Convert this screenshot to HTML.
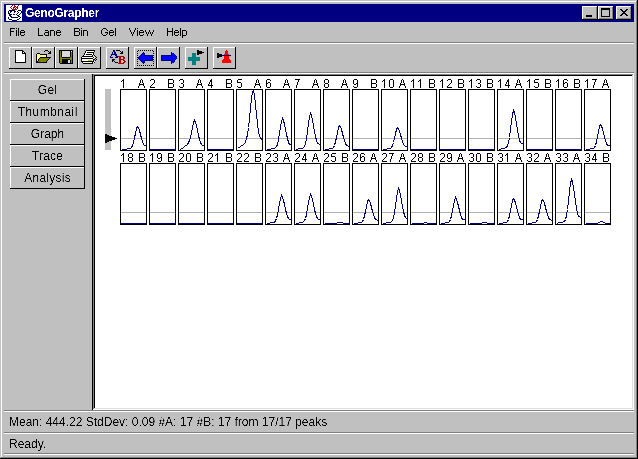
<!DOCTYPE html>
<html><head><meta charset="utf-8"><style>
html,body{margin:0;padding:0;}
#r{position:relative;width:638px;height:459px;overflow:hidden;background:#c0c0c0;font-family:"Liberation Sans",sans-serif;}
#r div,#r span,#r svg{position:absolute;}
.t{white-space:pre;filter:url(#thr3);}
.s{filter:url(#thr3) !important;}
</style></head><body><svg width="0" height="0" style="position:absolute"><filter id="thr" x="-20%" y="-20%" width="140%" height="140%"><feComponentTransfer><feFuncA type="discrete" tableValues="0 0 0 0 0 0 0 0 0 1 1 1 1 1 1 1 1 1 1 1"/></feComponentTransfer></filter><filter id="thr3" x="-20%" y="-20%" width="140%" height="140%"><feComponentTransfer><feFuncA type="linear" slope="3" intercept="-1.1"/></feComponentTransfer></filter></svg><div id="r">
<div style="left:0px;top:0px;width:638px;height:1px;background:#c0c0c0;"></div>
<div style="left:0px;top:0px;width:1px;height:459px;background:#c0c0c0;"></div>
<div style="left:1px;top:1px;width:636px;height:1px;background:#ffffff;"></div>
<div style="left:1px;top:1px;width:1px;height:457px;background:#ffffff;"></div>
<div style="left:0px;top:458px;width:638px;height:1px;background:#000000;"></div>
<div style="left:637px;top:0px;width:1px;height:459px;background:#000000;"></div>
<div style="left:1px;top:457px;width:636px;height:1px;background:#808080;"></div>
<div style="left:636px;top:1px;width:1px;height:457px;background:#808080;"></div>
<div style="left:4px;top:4px;width:630px;height:18px;background:#000080;"></div>
<div style="left:582px;top:6px;width:16px;height:14px;background:#c0c0c0;"></div>
<div style="left:582px;top:6px;width:15px;height:1px;background:#ffffff;"></div>
<div style="left:582px;top:6px;width:1px;height:13px;background:#ffffff;"></div>
<div style="left:582px;top:19px;width:16px;height:1px;background:#000000;"></div>
<div style="left:597px;top:6px;width:1px;height:14px;background:#000000;"></div>
<div style="left:583px;top:18px;width:14px;height:1px;background:#808080;"></div>
<div style="left:596px;top:7px;width:1px;height:12px;background:#808080;"></div>
<div style="left:598px;top:6px;width:16px;height:14px;background:#c0c0c0;"></div>
<div style="left:598px;top:6px;width:15px;height:1px;background:#ffffff;"></div>
<div style="left:598px;top:6px;width:1px;height:13px;background:#ffffff;"></div>
<div style="left:598px;top:19px;width:16px;height:1px;background:#000000;"></div>
<div style="left:613px;top:6px;width:1px;height:14px;background:#000000;"></div>
<div style="left:599px;top:18px;width:14px;height:1px;background:#808080;"></div>
<div style="left:612px;top:7px;width:1px;height:12px;background:#808080;"></div>
<div style="left:616px;top:6px;width:16px;height:14px;background:#c0c0c0;"></div>
<div style="left:616px;top:6px;width:15px;height:1px;background:#ffffff;"></div>
<div style="left:616px;top:6px;width:1px;height:13px;background:#ffffff;"></div>
<div style="left:616px;top:19px;width:16px;height:1px;background:#000000;"></div>
<div style="left:631px;top:6px;width:1px;height:14px;background:#000000;"></div>
<div style="left:617px;top:18px;width:14px;height:1px;background:#808080;"></div>
<div style="left:630px;top:7px;width:1px;height:12px;background:#808080;"></div>
<div style="left:586px;top:15px;width:6px;height:2px;background:#000000;"></div>
<div style="left:601px;top:8px;width:9px;height:9px;background:#000000;"></div>
<div style="left:602px;top:10px;width:7px;height:6px;background:#c0c0c0;"></div>
<svg style="left:620px;top:9px" width="8" height="7" shape-rendering="crispEdges"><rect x="0" y="0" width="2" height="1" fill="#000"/><rect x="6" y="0" width="2" height="1" fill="#000"/><rect x="1" y="1" width="2" height="1" fill="#000"/><rect x="5" y="1" width="2" height="1" fill="#000"/><rect x="2" y="2" width="2" height="1" fill="#000"/><rect x="4" y="2" width="2" height="1" fill="#000"/><rect x="3" y="3" width="2" height="1" fill="#000"/><rect x="3" y="3" width="2" height="1" fill="#000"/><rect x="4" y="4" width="2" height="1" fill="#000"/><rect x="2" y="4" width="2" height="1" fill="#000"/><rect x="5" y="5" width="2" height="1" fill="#000"/><rect x="1" y="5" width="2" height="1" fill="#000"/><rect x="6" y="6" width="2" height="1" fill="#000"/><rect x="0" y="6" width="2" height="1" fill="#000"/></svg>
<div style="left:6px;top:5px;width:16px;height:16px;background:#fff;"></div>
<svg style="left:6px;top:5px" width="16" height="16" shape-rendering="crispEdges"><rect x="6" y="0" width="1" height="1" fill="#b00000"/><rect x="8" y="0" width="1" height="1" fill="#b00000"/><rect x="12" y="0" width="1" height="1" fill="#600060"/><rect x="5" y="1" width="1" height="1" fill="#b00000"/><rect x="8" y="1" width="2" height="1" fill="#b00000"/><rect x="11" y="1" width="1" height="1" fill="#b00000"/><rect x="4" y="2" width="1" height="1" fill="#b00000"/><rect x="7" y="2" width="2" height="1" fill="#b00000"/><rect x="10" y="2" width="2" height="1" fill="#b00000"/><rect x="5" y="3" width="1" height="1" fill="#b00000"/><rect x="7" y="3" width="1" height="1" fill="#b00000"/><rect x="9" y="3" width="1" height="1" fill="#b00000"/><rect x="11" y="3" width="1" height="1" fill="#b00000"/><rect x="6" y="4" width="5" height="1" fill="#b00000"/><rect x="3" y="5" width="6" height="1" fill="#000040"/><rect x="12" y="5" width="3" height="1" fill="#000040"/><rect x="2" y="6" width="1" height="1" fill="#000040"/><rect x="4" y="6" width="2" height="1" fill="#000040"/><rect x="8" y="6" width="2" height="1" fill="#000040"/><rect x="11" y="6" width="1" height="1" fill="#000040"/><rect x="15" y="6" width="1" height="1" fill="#000040"/><rect x="2" y="7" width="1" height="1" fill="#000040"/><rect x="4" y="7" width="1" height="1" fill="#000040"/><rect x="8" y="7" width="1" height="1" fill="#600060"/><rect x="12" y="7" width="1" height="1" fill="#000040"/><rect x="15" y="7" width="1" height="1" fill="#000040"/><rect x="2" y="8" width="2" height="1" fill="#000040"/><rect x="11" y="8" width="1" height="1" fill="#000040"/><rect x="14" y="8" width="1" height="1" fill="#000040"/><rect x="3" y="9" width="3" height="1" fill="#000040"/><rect x="7" y="9" width="2" height="1" fill="#000040"/><rect x="10" y="9" width="1" height="1" fill="#000040"/><rect x="13" y="9" width="1" height="1" fill="#000040"/><rect x="3" y="10" width="2" height="1" fill="#000040"/><rect x="11" y="10" width="2" height="1" fill="#000040"/><rect x="4" y="11" width="2" height="1" fill="#000040"/><rect x="12" y="11" width="2" height="1" fill="#000040"/><rect x="2" y="12" width="1" height="1" fill="#000040"/><rect x="5" y="12" width="7" height="1" fill="#000040"/><rect x="14" y="12" width="1" height="1" fill="#000040"/><rect x="2" y="13" width="1" height="1" fill="#000040"/><rect x="13" y="13" width="1" height="1" fill="#000040"/><rect x="3" y="14" width="3" height="1" fill="#000040"/><rect x="11" y="14" width="2" height="1" fill="#000040"/><rect x="6" y="15" width="5" height="1" fill="#000040"/></svg>
<span class="t" style="left:25px;top:6px;font:bold 12px 'Liberation Sans';color:#fff;letter-spacing:-0.3px;line-height:14px;padding-right:4px">GenoGrapher</span>
<svg style="left:8px;top:28px" width="190" height="10" shape-rendering="crispEdges" fill="#000"><rect x="2" y="0" width="5" height="1"/><rect x="2" y="1" width="1" height="1"/><rect x="2" y="2" width="1" height="1"/><rect x="2" y="3" width="4" height="1"/><rect x="2" y="4" width="1" height="1"/><rect x="2" y="5" width="1" height="1"/><rect x="2" y="6" width="1" height="1"/><rect x="2" y="7" width="1" height="1"/><rect x="8" y="0" width="1" height="1"/><rect x="8" y="2" width="1" height="1"/><rect x="8" y="3" width="1" height="1"/><rect x="8" y="4" width="1" height="1"/><rect x="8" y="5" width="1" height="1"/><rect x="8" y="6" width="1" height="1"/><rect x="8" y="7" width="1" height="1"/><rect x="10" y="0" width="1" height="1"/><rect x="10" y="1" width="1" height="1"/><rect x="10" y="2" width="1" height="1"/><rect x="10" y="3" width="1" height="1"/><rect x="10" y="4" width="1" height="1"/><rect x="10" y="5" width="1" height="1"/><rect x="10" y="6" width="1" height="1"/><rect x="10" y="7" width="1" height="1"/><rect x="13" y="2" width="3" height="1"/><rect x="12" y="3" width="1" height="1"/><rect x="16" y="3" width="1" height="1"/><rect x="12" y="4" width="5" height="1"/><rect x="12" y="5" width="1" height="1"/><rect x="12" y="6" width="1" height="1"/><rect x="16" y="6" width="1" height="1"/><rect x="13" y="7" width="3" height="1"/><rect x="30" y="0" width="1" height="1"/><rect x="30" y="1" width="1" height="1"/><rect x="30" y="2" width="1" height="1"/><rect x="30" y="3" width="1" height="1"/><rect x="30" y="4" width="1" height="1"/><rect x="30" y="5" width="1" height="1"/><rect x="30" y="6" width="1" height="1"/><rect x="30" y="7" width="5" height="1"/><rect x="37" y="2" width="3" height="1"/><rect x="40" y="3" width="1" height="1"/><rect x="37" y="4" width="4" height="1"/><rect x="36" y="5" width="1" height="1"/><rect x="40" y="5" width="1" height="1"/><rect x="36" y="6" width="1" height="1"/><rect x="40" y="6" width="1" height="1"/><rect x="37" y="7" width="4" height="1"/><rect x="42" y="2" width="4" height="1"/><rect x="42" y="3" width="1" height="1"/><rect x="46" y="3" width="1" height="1"/><rect x="42" y="4" width="1" height="1"/><rect x="46" y="4" width="1" height="1"/><rect x="42" y="5" width="1" height="1"/><rect x="46" y="5" width="1" height="1"/><rect x="42" y="6" width="1" height="1"/><rect x="46" y="6" width="1" height="1"/><rect x="42" y="7" width="1" height="1"/><rect x="46" y="7" width="1" height="1"/><rect x="49" y="2" width="3" height="1"/><rect x="48" y="3" width="1" height="1"/><rect x="52" y="3" width="1" height="1"/><rect x="48" y="4" width="5" height="1"/><rect x="48" y="5" width="1" height="1"/><rect x="48" y="6" width="1" height="1"/><rect x="52" y="6" width="1" height="1"/><rect x="49" y="7" width="3" height="1"/><rect x="66" y="0" width="5" height="1"/><rect x="66" y="1" width="1" height="1"/><rect x="71" y="1" width="1" height="1"/><rect x="66" y="2" width="1" height="1"/><rect x="71" y="2" width="1" height="1"/><rect x="66" y="3" width="5" height="1"/><rect x="66" y="4" width="1" height="1"/><rect x="71" y="4" width="1" height="1"/><rect x="66" y="5" width="1" height="1"/><rect x="71" y="5" width="1" height="1"/><rect x="66" y="6" width="1" height="1"/><rect x="71" y="6" width="1" height="1"/><rect x="66" y="7" width="5" height="1"/><rect x="73" y="0" width="1" height="1"/><rect x="73" y="2" width="1" height="1"/><rect x="73" y="3" width="1" height="1"/><rect x="73" y="4" width="1" height="1"/><rect x="73" y="5" width="1" height="1"/><rect x="73" y="6" width="1" height="1"/><rect x="73" y="7" width="1" height="1"/><rect x="75" y="2" width="4" height="1"/><rect x="75" y="3" width="1" height="1"/><rect x="79" y="3" width="1" height="1"/><rect x="75" y="4" width="1" height="1"/><rect x="79" y="4" width="1" height="1"/><rect x="75" y="5" width="1" height="1"/><rect x="79" y="5" width="1" height="1"/><rect x="75" y="6" width="1" height="1"/><rect x="79" y="6" width="1" height="1"/><rect x="75" y="7" width="1" height="1"/><rect x="79" y="7" width="1" height="1"/><rect x="95" y="0" width="3" height="1"/><rect x="94" y="1" width="1" height="1"/><rect x="98" y="1" width="1" height="1"/><rect x="93" y="2" width="1" height="1"/><rect x="99" y="2" width="1" height="1"/><rect x="93" y="3" width="1" height="1"/><rect x="93" y="4" width="1" height="1"/><rect x="97" y="4" width="3" height="1"/><rect x="93" y="5" width="1" height="1"/><rect x="99" y="5" width="1" height="1"/><rect x="94" y="6" width="1" height="1"/><rect x="98" y="6" width="1" height="1"/><rect x="95" y="7" width="3" height="1"/><rect x="102" y="2" width="3" height="1"/><rect x="101" y="3" width="1" height="1"/><rect x="105" y="3" width="1" height="1"/><rect x="101" y="4" width="5" height="1"/><rect x="101" y="5" width="1" height="1"/><rect x="101" y="6" width="1" height="1"/><rect x="105" y="6" width="1" height="1"/><rect x="102" y="7" width="3" height="1"/><rect x="107" y="0" width="1" height="1"/><rect x="107" y="1" width="1" height="1"/><rect x="107" y="2" width="1" height="1"/><rect x="107" y="3" width="1" height="1"/><rect x="107" y="4" width="1" height="1"/><rect x="107" y="5" width="1" height="1"/><rect x="107" y="6" width="1" height="1"/><rect x="107" y="7" width="1" height="1"/><rect x="121" y="0" width="1" height="1"/><rect x="127" y="0" width="1" height="1"/><rect x="121" y="1" width="1" height="1"/><rect x="127" y="1" width="1" height="1"/><rect x="122" y="2" width="1" height="1"/><rect x="126" y="2" width="1" height="1"/><rect x="122" y="3" width="1" height="1"/><rect x="126" y="3" width="1" height="1"/><rect x="123" y="4" width="1" height="1"/><rect x="125" y="4" width="1" height="1"/><rect x="123" y="5" width="1" height="1"/><rect x="125" y="5" width="1" height="1"/><rect x="124" y="6" width="1" height="1"/><rect x="124" y="7" width="1" height="1"/><rect x="129" y="0" width="1" height="1"/><rect x="129" y="2" width="1" height="1"/><rect x="129" y="3" width="1" height="1"/><rect x="129" y="4" width="1" height="1"/><rect x="129" y="5" width="1" height="1"/><rect x="129" y="6" width="1" height="1"/><rect x="129" y="7" width="1" height="1"/><rect x="132" y="2" width="3" height="1"/><rect x="131" y="3" width="1" height="1"/><rect x="135" y="3" width="1" height="1"/><rect x="131" y="4" width="5" height="1"/><rect x="131" y="5" width="1" height="1"/><rect x="131" y="6" width="1" height="1"/><rect x="135" y="6" width="1" height="1"/><rect x="132" y="7" width="3" height="1"/><rect x="137" y="2" width="1" height="1"/><rect x="141" y="2" width="1" height="1"/><rect x="145" y="2" width="1" height="1"/><rect x="137" y="3" width="1" height="1"/><rect x="141" y="3" width="1" height="1"/><rect x="145" y="3" width="1" height="1"/><rect x="138" y="4" width="1" height="1"/><rect x="140" y="4" width="1" height="1"/><rect x="142" y="4" width="1" height="1"/><rect x="144" y="4" width="1" height="1"/><rect x="138" y="5" width="1" height="1"/><rect x="140" y="5" width="1" height="1"/><rect x="142" y="5" width="1" height="1"/><rect x="144" y="5" width="1" height="1"/><rect x="139" y="6" width="1" height="1"/><rect x="143" y="6" width="1" height="1"/><rect x="139" y="7" width="1" height="1"/><rect x="143" y="7" width="1" height="1"/><rect x="159" y="0" width="1" height="1"/><rect x="164" y="0" width="1" height="1"/><rect x="159" y="1" width="1" height="1"/><rect x="164" y="1" width="1" height="1"/><rect x="159" y="2" width="1" height="1"/><rect x="164" y="2" width="1" height="1"/><rect x="159" y="3" width="6" height="1"/><rect x="159" y="4" width="1" height="1"/><rect x="164" y="4" width="1" height="1"/><rect x="159" y="5" width="1" height="1"/><rect x="164" y="5" width="1" height="1"/><rect x="159" y="6" width="1" height="1"/><rect x="164" y="6" width="1" height="1"/><rect x="159" y="7" width="1" height="1"/><rect x="164" y="7" width="1" height="1"/><rect x="167" y="2" width="3" height="1"/><rect x="166" y="3" width="1" height="1"/><rect x="170" y="3" width="1" height="1"/><rect x="166" y="4" width="5" height="1"/><rect x="166" y="5" width="1" height="1"/><rect x="166" y="6" width="1" height="1"/><rect x="170" y="6" width="1" height="1"/><rect x="167" y="7" width="3" height="1"/><rect x="172" y="0" width="1" height="1"/><rect x="172" y="1" width="1" height="1"/><rect x="172" y="2" width="1" height="1"/><rect x="172" y="3" width="1" height="1"/><rect x="172" y="4" width="1" height="1"/><rect x="172" y="5" width="1" height="1"/><rect x="172" y="6" width="1" height="1"/><rect x="172" y="7" width="1" height="1"/><rect x="174" y="2" width="4" height="1"/><rect x="174" y="3" width="1" height="1"/><rect x="178" y="3" width="1" height="1"/><rect x="174" y="4" width="1" height="1"/><rect x="178" y="4" width="1" height="1"/><rect x="174" y="5" width="1" height="1"/><rect x="178" y="5" width="1" height="1"/><rect x="174" y="6" width="1" height="1"/><rect x="178" y="6" width="1" height="1"/><rect x="174" y="7" width="4" height="1"/><rect x="174" y="8" width="1" height="1"/><rect x="174" y="9" width="1" height="1"/></svg>
<div style="left:4px;top:42px;width:630px;height:1px;background:#808080;"></div>
<div style="left:4px;top:43px;width:630px;height:1px;background:#ffffff;"></div>
<div style="left:4px;top:72px;width:630px;height:1px;background:#808080;"></div>
<div style="left:4px;top:73px;width:630px;height:1px;background:#ffffff;"></div>
<div style="left:9px;top:47px;width:23px;height:1px;background:#ffffff;"></div>
<div style="left:9px;top:47px;width:1px;height:22px;background:#ffffff;"></div>
<div style="left:9px;top:68px;width:23px;height:1px;background:#000000;"></div>
<div style="left:31px;top:47px;width:1px;height:22px;background:#000000;"></div>
<div style="left:32px;top:47px;width:23px;height:1px;background:#ffffff;"></div>
<div style="left:32px;top:47px;width:1px;height:22px;background:#ffffff;"></div>
<div style="left:32px;top:68px;width:23px;height:1px;background:#000000;"></div>
<div style="left:54px;top:47px;width:1px;height:22px;background:#000000;"></div>
<div style="left:55px;top:47px;width:23px;height:1px;background:#ffffff;"></div>
<div style="left:55px;top:47px;width:1px;height:22px;background:#ffffff;"></div>
<div style="left:55px;top:68px;width:23px;height:1px;background:#000000;"></div>
<div style="left:77px;top:47px;width:1px;height:22px;background:#000000;"></div>
<div style="left:78px;top:47px;width:23px;height:1px;background:#ffffff;"></div>
<div style="left:78px;top:47px;width:1px;height:22px;background:#ffffff;"></div>
<div style="left:78px;top:68px;width:23px;height:1px;background:#000000;"></div>
<div style="left:100px;top:47px;width:1px;height:22px;background:#000000;"></div>
<div style="left:106px;top:47px;width:23px;height:1px;background:#ffffff;"></div>
<div style="left:106px;top:47px;width:1px;height:22px;background:#ffffff;"></div>
<div style="left:106px;top:68px;width:23px;height:1px;background:#000000;"></div>
<div style="left:128px;top:47px;width:1px;height:22px;background:#000000;"></div>
<div style="left:134px;top:47px;width:23px;height:1px;background:#ffffff;"></div>
<div style="left:134px;top:47px;width:1px;height:22px;background:#ffffff;"></div>
<div style="left:134px;top:68px;width:23px;height:1px;background:#000000;"></div>
<div style="left:156px;top:47px;width:1px;height:22px;background:#000000;"></div>
<div style="left:157px;top:47px;width:23px;height:1px;background:#ffffff;"></div>
<div style="left:157px;top:47px;width:1px;height:22px;background:#ffffff;"></div>
<div style="left:157px;top:68px;width:23px;height:1px;background:#000000;"></div>
<div style="left:179px;top:47px;width:1px;height:22px;background:#000000;"></div>
<div style="left:185px;top:47px;width:23px;height:1px;background:#ffffff;"></div>
<div style="left:185px;top:47px;width:1px;height:22px;background:#ffffff;"></div>
<div style="left:185px;top:68px;width:23px;height:1px;background:#000000;"></div>
<div style="left:207px;top:47px;width:1px;height:22px;background:#000000;"></div>
<div style="left:213px;top:47px;width:23px;height:1px;background:#ffffff;"></div>
<div style="left:213px;top:47px;width:1px;height:22px;background:#ffffff;"></div>
<div style="left:213px;top:68px;width:23px;height:1px;background:#000000;"></div>
<div style="left:235px;top:47px;width:1px;height:22px;background:#000000;"></div>
<svg style="left:15px;top:50px" width="11" height="13" shape-rendering="crispEdges"><rect x="0" y="0" width="8" height="1" fill="#000000"/><rect x="0" y="1" width="1" height="1" fill="#000000"/><rect x="1" y="1" width="6" height="1" fill="#ffffff"/><rect x="7" y="1" width="2" height="1" fill="#000000"/><rect x="0" y="2" width="1" height="1" fill="#000000"/><rect x="1" y="2" width="6" height="1" fill="#ffffff"/><rect x="7" y="2" width="1" height="1" fill="#000000"/><rect x="8" y="2" width="1" height="1" fill="#ffffff"/><rect x="9" y="2" width="1" height="1" fill="#000000"/><rect x="0" y="3" width="1" height="1" fill="#000000"/><rect x="1" y="3" width="6" height="1" fill="#ffffff"/><rect x="7" y="3" width="4" height="1" fill="#000000"/><rect x="0" y="4" width="1" height="1" fill="#000000"/><rect x="1" y="4" width="9" height="1" fill="#ffffff"/><rect x="10" y="4" width="1" height="1" fill="#000000"/><rect x="0" y="5" width="1" height="1" fill="#000000"/><rect x="1" y="5" width="9" height="1" fill="#ffffff"/><rect x="10" y="5" width="1" height="1" fill="#000000"/><rect x="0" y="6" width="1" height="1" fill="#000000"/><rect x="1" y="6" width="9" height="1" fill="#ffffff"/><rect x="10" y="6" width="1" height="1" fill="#000000"/><rect x="0" y="7" width="1" height="1" fill="#000000"/><rect x="1" y="7" width="9" height="1" fill="#ffffff"/><rect x="10" y="7" width="1" height="1" fill="#000000"/><rect x="0" y="8" width="1" height="1" fill="#000000"/><rect x="1" y="8" width="9" height="1" fill="#ffffff"/><rect x="10" y="8" width="1" height="1" fill="#000000"/><rect x="0" y="9" width="1" height="1" fill="#000000"/><rect x="1" y="9" width="9" height="1" fill="#ffffff"/><rect x="10" y="9" width="1" height="1" fill="#000000"/><rect x="0" y="10" width="1" height="1" fill="#000000"/><rect x="1" y="10" width="9" height="1" fill="#ffffff"/><rect x="10" y="10" width="1" height="1" fill="#000000"/><rect x="0" y="11" width="1" height="1" fill="#000000"/><rect x="1" y="11" width="9" height="1" fill="#ffffff"/><rect x="10" y="11" width="1" height="1" fill="#000000"/><rect x="0" y="12" width="11" height="1" fill="#000000"/></svg>
<svg style="left:36px;top:50px" width="16" height="13" shape-rendering="crispEdges"><rect x="9" y="0" width="3" height="1" fill="#000000"/><rect x="8" y="1" width="1" height="1" fill="#000000"/><rect x="12" y="1" width="1" height="1" fill="#000000"/><rect x="14" y="1" width="1" height="1" fill="#000000"/><rect x="13" y="2" width="2" height="1" fill="#000000"/><rect x="1" y="3" width="3" height="1" fill="#000000"/><rect x="12" y="3" width="3" height="1" fill="#000000"/><rect x="0" y="4" width="1" height="1" fill="#000000"/><rect x="1" y="4" width="3" height="1" fill="#ffff80"/><rect x="4" y="4" width="7" height="1" fill="#000000"/><rect x="0" y="5" width="1" height="1" fill="#000000"/><rect x="1" y="5" width="9" height="1" fill="#ffff80"/><rect x="10" y="5" width="1" height="1" fill="#000000"/><rect x="0" y="6" width="1" height="1" fill="#000000"/><rect x="1" y="6" width="9" height="1" fill="#ffff80"/><rect x="10" y="6" width="1" height="1" fill="#000000"/><rect x="0" y="7" width="1" height="1" fill="#000000"/><rect x="1" y="7" width="3" height="1" fill="#ffff80"/><rect x="4" y="7" width="11" height="1" fill="#000000"/><rect x="0" y="8" width="1" height="1" fill="#000000"/><rect x="1" y="8" width="2" height="1" fill="#ffff80"/><rect x="3" y="8" width="1" height="1" fill="#000000"/><rect x="4" y="8" width="9" height="1" fill="#808000"/><rect x="13" y="8" width="1" height="1" fill="#000000"/><rect x="0" y="9" width="1" height="1" fill="#000000"/><rect x="1" y="9" width="1" height="1" fill="#ffff80"/><rect x="2" y="9" width="1" height="1" fill="#000000"/><rect x="3" y="9" width="9" height="1" fill="#808000"/><rect x="12" y="9" width="1" height="1" fill="#000000"/><rect x="0" y="10" width="1" height="1" fill="#000000"/><rect x="1" y="10" width="1" height="1" fill="#ffff80"/><rect x="2" y="10" width="1" height="1" fill="#000000"/><rect x="3" y="10" width="8" height="1" fill="#808000"/><rect x="11" y="10" width="1" height="1" fill="#000000"/><rect x="0" y="11" width="2" height="1" fill="#000000"/><rect x="2" y="11" width="8" height="1" fill="#808000"/><rect x="10" y="11" width="1" height="1" fill="#000000"/><rect x="0" y="12" width="11" height="1" fill="#000000"/></svg>
<svg style="left:59px;top:50px" width="14" height="14" shape-rendering="crispEdges"><rect x="0" y="0" width="14" height="1" fill="#000000"/><rect x="0" y="1" width="1" height="1" fill="#000000"/><rect x="1" y="1" width="1" height="1" fill="#808000"/><rect x="2" y="1" width="1" height="1" fill="#000000"/><rect x="3" y="1" width="8" height="1" fill="#d8d8d8"/><rect x="11" y="1" width="1" height="1" fill="#000000"/><rect x="12" y="1" width="1" height="1" fill="#ffffff"/><rect x="13" y="1" width="1" height="1" fill="#000000"/><rect x="0" y="2" width="1" height="1" fill="#000000"/><rect x="1" y="2" width="1" height="1" fill="#808000"/><rect x="2" y="2" width="1" height="1" fill="#000000"/><rect x="3" y="2" width="8" height="1" fill="#d8d8d8"/><rect x="11" y="2" width="1" height="1" fill="#000000"/><rect x="12" y="2" width="1" height="1" fill="#808000"/><rect x="13" y="2" width="1" height="1" fill="#000000"/><rect x="0" y="3" width="1" height="1" fill="#000000"/><rect x="1" y="3" width="1" height="1" fill="#808000"/><rect x="2" y="3" width="1" height="1" fill="#000000"/><rect x="3" y="3" width="8" height="1" fill="#d8d8d8"/><rect x="11" y="3" width="1" height="1" fill="#000000"/><rect x="12" y="3" width="1" height="1" fill="#808000"/><rect x="13" y="3" width="1" height="1" fill="#000000"/><rect x="0" y="4" width="1" height="1" fill="#000000"/><rect x="1" y="4" width="1" height="1" fill="#808000"/><rect x="2" y="4" width="1" height="1" fill="#000000"/><rect x="3" y="4" width="8" height="1" fill="#d8d8d8"/><rect x="11" y="4" width="1" height="1" fill="#000000"/><rect x="12" y="4" width="1" height="1" fill="#808000"/><rect x="13" y="4" width="1" height="1" fill="#000000"/><rect x="0" y="5" width="1" height="1" fill="#000000"/><rect x="1" y="5" width="1" height="1" fill="#808000"/><rect x="2" y="5" width="1" height="1" fill="#000000"/><rect x="3" y="5" width="8" height="1" fill="#d8d8d8"/><rect x="11" y="5" width="1" height="1" fill="#000000"/><rect x="12" y="5" width="1" height="1" fill="#808000"/><rect x="13" y="5" width="1" height="1" fill="#000000"/><rect x="0" y="6" width="1" height="1" fill="#000000"/><rect x="1" y="6" width="1" height="1" fill="#808000"/><rect x="2" y="6" width="1" height="1" fill="#000000"/><rect x="3" y="6" width="8" height="1" fill="#d8d8d8"/><rect x="11" y="6" width="1" height="1" fill="#000000"/><rect x="12" y="6" width="1" height="1" fill="#808000"/><rect x="13" y="6" width="1" height="1" fill="#000000"/><rect x="0" y="7" width="1" height="1" fill="#000000"/><rect x="1" y="7" width="2" height="1" fill="#808000"/><rect x="3" y="7" width="8" height="1" fill="#000000"/><rect x="11" y="7" width="2" height="1" fill="#808000"/><rect x="13" y="7" width="1" height="1" fill="#000000"/><rect x="0" y="8" width="1" height="1" fill="#000000"/><rect x="1" y="8" width="12" height="1" fill="#808000"/><rect x="13" y="8" width="1" height="1" fill="#000000"/><rect x="0" y="9" width="1" height="1" fill="#000000"/><rect x="1" y="9" width="2" height="1" fill="#808000"/><rect x="3" y="9" width="8" height="1" fill="#000000"/><rect x="11" y="9" width="2" height="1" fill="#808000"/><rect x="13" y="9" width="1" height="1" fill="#000000"/><rect x="0" y="10" width="1" height="1" fill="#000000"/><rect x="1" y="10" width="2" height="1" fill="#808000"/><rect x="3" y="10" width="6" height="1" fill="#000000"/><rect x="9" y="10" width="2" height="1" fill="#d8d8d8"/><rect x="11" y="10" width="1" height="1" fill="#000000"/><rect x="12" y="10" width="1" height="1" fill="#808000"/><rect x="13" y="10" width="1" height="1" fill="#000000"/><rect x="0" y="11" width="1" height="1" fill="#000000"/><rect x="1" y="11" width="2" height="1" fill="#808000"/><rect x="3" y="11" width="6" height="1" fill="#000000"/><rect x="9" y="11" width="2" height="1" fill="#d8d8d8"/><rect x="11" y="11" width="1" height="1" fill="#000000"/><rect x="12" y="11" width="1" height="1" fill="#808000"/><rect x="13" y="11" width="1" height="1" fill="#000000"/><rect x="0" y="12" width="1" height="1" fill="#000000"/><rect x="1" y="12" width="2" height="1" fill="#808000"/><rect x="3" y="12" width="6" height="1" fill="#000000"/><rect x="9" y="12" width="2" height="1" fill="#d8d8d8"/><rect x="11" y="12" width="1" height="1" fill="#000000"/><rect x="12" y="12" width="1" height="1" fill="#808000"/><rect x="13" y="12" width="1" height="1" fill="#000000"/><rect x="1" y="13" width="13" height="1" fill="#000000"/></svg>
<svg style="left:81px;top:50px" width="16" height="14" shape-rendering="crispEdges"><rect x="5" y="0" width="9" height="1" fill="#000000"/><rect x="4" y="1" width="1" height="1" fill="#000000"/><rect x="5" y="1" width="8" height="1" fill="#ffffff"/><rect x="13" y="1" width="1" height="1" fill="#000000"/><rect x="4" y="2" width="1" height="1" fill="#000000"/><rect x="5" y="2" width="1" height="1" fill="#ffffff"/><rect x="6" y="2" width="7" height="1" fill="#000000"/><rect x="3" y="3" width="1" height="1" fill="#000000"/><rect x="4" y="3" width="8" height="1" fill="#ffffff"/><rect x="12" y="3" width="1" height="1" fill="#000000"/><rect x="3" y="4" width="1" height="1" fill="#000000"/><rect x="4" y="4" width="1" height="1" fill="#ffffff"/><rect x="5" y="4" width="6" height="1" fill="#000000"/><rect x="11" y="4" width="1" height="1" fill="#ffffff"/><rect x="12" y="4" width="1" height="1" fill="#000000"/><rect x="2" y="5" width="1" height="1" fill="#000000"/><rect x="3" y="5" width="8" height="1" fill="#ffffff"/><rect x="11" y="5" width="1" height="1" fill="#000000"/><rect x="13" y="5" width="1" height="1" fill="#000000"/><rect x="1" y="6" width="11" height="1" fill="#000000"/><rect x="12" y="6" width="1" height="1" fill="#ffffff"/><rect x="14" y="6" width="1" height="1" fill="#000000"/><rect x="0" y="7" width="1" height="1" fill="#000000"/><rect x="1" y="7" width="11" height="1" fill="#ffffff"/><rect x="12" y="7" width="1" height="1" fill="#000000"/><rect x="13" y="7" width="1" height="1" fill="#ffffff"/><rect x="15" y="7" width="1" height="1" fill="#000000"/><rect x="0" y="8" width="12" height="1" fill="#000000"/><rect x="12" y="8" width="1" height="1" fill="#ffffff"/><rect x="14" y="8" width="1" height="1" fill="#000000"/><rect x="0" y="9" width="1" height="1" fill="#000000"/><rect x="1" y="9" width="11" height="1" fill="#ffffff"/><rect x="12" y="9" width="2" height="1" fill="#000000"/><rect x="15" y="9" width="1" height="1" fill="#000000"/><rect x="0" y="10" width="1" height="1" fill="#000000"/><rect x="1" y="10" width="6" height="1" fill="#ffffff"/><rect x="7" y="10" width="4" height="1" fill="#c0c000"/><rect x="11" y="10" width="1" height="1" fill="#ffffff"/><rect x="12" y="10" width="1" height="1" fill="#000000"/><rect x="14" y="10" width="1" height="1" fill="#000000"/><rect x="0" y="11" width="13" height="1" fill="#000000"/><rect x="13" y="11" width="1" height="1" fill="#ffffff"/><rect x="1" y="12" width="1" height="1" fill="#000000"/><rect x="2" y="12" width="9" height="1" fill="#ffffff"/><rect x="11" y="12" width="1" height="1" fill="#000000"/><rect x="12" y="12" width="1" height="1" fill="#ffffff"/><rect x="13" y="12" width="1" height="1" fill="#000000"/><rect x="2" y="13" width="10" height="1" fill="#000000"/></svg>
<svg style="left:110px;top:50px" width="16" height="14" shape-rendering="crispEdges"><rect x="3" y="0" width="2" height="1" fill="#000080"/><rect x="6" y="0" width="4" height="1" fill="#000000"/><rect x="3" y="1" width="2" height="1" fill="#000080"/><rect x="10" y="1" width="1" height="1" fill="#000000"/><rect x="12" y="1" width="1" height="1" fill="#000000"/><rect x="2" y="2" width="1" height="1" fill="#000080"/><rect x="4" y="2" width="2" height="1" fill="#000080"/><rect x="11" y="2" width="2" height="1" fill="#000000"/><rect x="2" y="3" width="1" height="1" fill="#000080"/><rect x="4" y="3" width="2" height="1" fill="#000080"/><rect x="10" y="3" width="3" height="1" fill="#000000"/><rect x="1" y="4" width="6" height="1" fill="#000080"/><rect x="1" y="5" width="1" height="1" fill="#000080"/><rect x="5" y="5" width="2" height="1" fill="#000080"/><rect x="0" y="6" width="1" height="1" fill="#000080"/><rect x="6" y="6" width="2" height="1" fill="#000080"/><rect x="8" y="6" width="6" height="1" fill="#b00000"/><rect x="0" y="7" width="3" height="1" fill="#000080"/><rect x="5" y="7" width="3" height="1" fill="#000080"/><rect x="9" y="7" width="2" height="1" fill="#b00000"/><rect x="13" y="7" width="2" height="1" fill="#b00000"/><rect x="9" y="8" width="2" height="1" fill="#b00000"/><rect x="13" y="8" width="2" height="1" fill="#b00000"/><rect x="2" y="9" width="3" height="1" fill="#000000"/><rect x="9" y="9" width="5" height="1" fill="#b00000"/><rect x="2" y="10" width="2" height="1" fill="#000000"/><rect x="9" y="10" width="2" height="1" fill="#b00000"/><rect x="13" y="10" width="2" height="1" fill="#b00000"/><rect x="2" y="11" width="1" height="1" fill="#000000"/><rect x="4" y="11" width="1" height="1" fill="#000000"/><rect x="9" y="11" width="2" height="1" fill="#b00000"/><rect x="14" y="11" width="2" height="1" fill="#b00000"/><rect x="5" y="12" width="3" height="1" fill="#000000"/><rect x="9" y="12" width="2" height="1" fill="#b00000"/><rect x="13" y="12" width="2" height="1" fill="#b00000"/><rect x="8" y="13" width="6" height="1" fill="#b00000"/></svg>
<svg style="left:138px;top:52px" width="15" height="12" shape-rendering="crispEdges"><rect x="5" y="0" width="1" height="1" fill="#000080"/><rect x="4" y="1" width="1" height="1" fill="#000080"/><rect x="5" y="1" width="1" height="1" fill="#0000ff"/><rect x="6" y="1" width="1" height="1" fill="#000080"/><rect x="3" y="2" width="1" height="1" fill="#000080"/><rect x="4" y="2" width="2" height="1" fill="#0000ff"/><rect x="6" y="2" width="1" height="1" fill="#000080"/><rect x="2" y="3" width="1" height="1" fill="#000080"/><rect x="3" y="3" width="3" height="1" fill="#0000ff"/><rect x="6" y="3" width="9" height="1" fill="#000080"/><rect x="1" y="4" width="1" height="1" fill="#000080"/><rect x="2" y="4" width="12" height="1" fill="#0000ff"/><rect x="14" y="4" width="1" height="1" fill="#000080"/><rect x="0" y="5" width="1" height="1" fill="#000080"/><rect x="1" y="5" width="13" height="1" fill="#0000ff"/><rect x="14" y="5" width="1" height="1" fill="#000080"/><rect x="0" y="6" width="1" height="1" fill="#000080"/><rect x="1" y="6" width="13" height="1" fill="#0000ff"/><rect x="14" y="6" width="1" height="1" fill="#000080"/><rect x="1" y="7" width="1" height="1" fill="#000080"/><rect x="2" y="7" width="12" height="1" fill="#0000ff"/><rect x="14" y="7" width="1" height="1" fill="#000080"/><rect x="2" y="8" width="1" height="1" fill="#000080"/><rect x="3" y="8" width="3" height="1" fill="#0000ff"/><rect x="6" y="8" width="9" height="1" fill="#000080"/><rect x="3" y="9" width="1" height="1" fill="#000080"/><rect x="4" y="9" width="2" height="1" fill="#0000ff"/><rect x="6" y="9" width="1" height="1" fill="#000080"/><rect x="4" y="10" width="1" height="1" fill="#000080"/><rect x="5" y="10" width="1" height="1" fill="#0000ff"/><rect x="6" y="10" width="1" height="1" fill="#000080"/><rect x="5" y="11" width="1" height="1" fill="#000080"/></svg>
<svg style="left:161px;top:52px" width="16" height="12" shape-rendering="crispEdges"><rect x="10" y="0" width="1" height="1" fill="#000080"/><rect x="10" y="1" width="1" height="1" fill="#000080"/><rect x="11" y="1" width="1" height="1" fill="#0000ff"/><rect x="12" y="1" width="1" height="1" fill="#000080"/><rect x="10" y="2" width="1" height="1" fill="#000080"/><rect x="11" y="2" width="2" height="1" fill="#0000ff"/><rect x="13" y="2" width="1" height="1" fill="#000080"/><rect x="0" y="3" width="10" height="1" fill="#000080"/><rect x="10" y="3" width="4" height="1" fill="#0000ff"/><rect x="14" y="3" width="1" height="1" fill="#000080"/><rect x="0" y="4" width="1" height="1" fill="#000080"/><rect x="1" y="4" width="14" height="1" fill="#0000ff"/><rect x="15" y="4" width="1" height="1" fill="#000080"/><rect x="0" y="5" width="1" height="1" fill="#000080"/><rect x="1" y="5" width="15" height="1" fill="#0000ff"/><rect x="0" y="6" width="1" height="1" fill="#000080"/><rect x="1" y="6" width="14" height="1" fill="#0000ff"/><rect x="15" y="6" width="1" height="1" fill="#000080"/><rect x="0" y="7" width="1" height="1" fill="#000080"/><rect x="1" y="7" width="13" height="1" fill="#0000ff"/><rect x="14" y="7" width="1" height="1" fill="#000080"/><rect x="0" y="8" width="10" height="1" fill="#000080"/><rect x="10" y="8" width="3" height="1" fill="#0000ff"/><rect x="13" y="8" width="1" height="1" fill="#000080"/><rect x="10" y="9" width="1" height="1" fill="#000080"/><rect x="11" y="9" width="2" height="1" fill="#0000ff"/><rect x="13" y="9" width="1" height="1" fill="#000080"/><rect x="10" y="10" width="1" height="1" fill="#000080"/><rect x="11" y="10" width="1" height="1" fill="#0000ff"/><rect x="12" y="10" width="1" height="1" fill="#000080"/><rect x="10" y="11" width="1" height="1" fill="#000080"/></svg>
<svg style="left:188px;top:50px" width="16" height="15" shape-rendering="crispEdges"><rect x="9" y="0" width="2" height="1" fill="#000000"/><rect x="9" y="1" width="5" height="1" fill="#000000"/><rect x="9" y="2" width="7" height="1" fill="#000000"/><rect x="4" y="3" width="4" height="1" fill="#008080"/><rect x="9" y="3" width="5" height="1" fill="#000000"/><rect x="4" y="4" width="4" height="1" fill="#008080"/><rect x="9" y="4" width="2" height="1" fill="#000000"/><rect x="4" y="5" width="4" height="1" fill="#008080"/><rect x="4" y="6" width="4" height="1" fill="#008080"/><rect x="0" y="7" width="12" height="1" fill="#008080"/><rect x="0" y="8" width="12" height="1" fill="#008080"/><rect x="0" y="9" width="12" height="1" fill="#008080"/><rect x="0" y="10" width="12" height="1" fill="#008080"/><rect x="4" y="11" width="4" height="1" fill="#008080"/><rect x="4" y="12" width="4" height="1" fill="#008080"/><rect x="4" y="13" width="4" height="1" fill="#008080"/><rect x="4" y="14" width="4" height="1" fill="#008080"/></svg>
<svg style="left:217px;top:50px" width="14" height="13" shape-rendering="crispEdges"><rect x="9" y="0" width="1" height="1" fill="#ff0000"/><rect x="8" y="1" width="3" height="1" fill="#ff0000"/><rect x="8" y="2" width="3" height="1" fill="#ff0000"/><rect x="0" y="3" width="2" height="1" fill="#000000"/><rect x="8" y="3" width="3" height="1" fill="#ff0000"/><rect x="0" y="4" width="5" height="1" fill="#000000"/><rect x="7" y="4" width="5" height="1" fill="#ff0000"/><rect x="0" y="5" width="5" height="1" fill="#000000"/><rect x="5" y="5" width="9" height="1" fill="#000080"/><rect x="0" y="6" width="5" height="1" fill="#000000"/><rect x="7" y="6" width="5" height="1" fill="#ff0000"/><rect x="0" y="7" width="2" height="1" fill="#000000"/><rect x="7" y="7" width="5" height="1" fill="#ff0000"/><rect x="7" y="8" width="5" height="1" fill="#ff0000"/><rect x="6" y="9" width="7" height="1" fill="#ff0000"/><rect x="5" y="10" width="9" height="1" fill="#ff0000"/><rect x="5" y="11" width="9" height="1" fill="#ff0000"/><rect x="5" y="12" width="9" height="1" fill="#ff0000"/></svg>
<div style="left:10px;top:79px;width:75px;height:1px;background:#ffffff;"></div>
<div style="left:10px;top:79px;width:1px;height:22px;background:#ffffff;"></div>
<div style="left:10px;top:100px;width:75px;height:1px;background:#000000;"></div>
<div style="left:84px;top:79px;width:1px;height:22px;background:#000000;"></div>
<span class="t" style="left:10.2px;top:83px;width:75px;text-align:center;font:12px 'Liberation Sans';line-height:15px;letter-spacing:0.4px">Gel</span>
<div style="left:10px;top:101px;width:75px;height:1px;background:#ffffff;"></div>
<div style="left:10px;top:101px;width:1px;height:22px;background:#ffffff;"></div>
<div style="left:10px;top:122px;width:75px;height:1px;background:#000000;"></div>
<div style="left:84px;top:101px;width:1px;height:22px;background:#000000;"></div>
<span class="t" style="left:10.225px;top:105px;width:75px;text-align:center;font:12px 'Liberation Sans';line-height:15px;letter-spacing:0.45px">Thumbnail</span>
<div style="left:10px;top:123px;width:75px;height:1px;background:#ffffff;"></div>
<div style="left:10px;top:123px;width:1px;height:22px;background:#ffffff;"></div>
<div style="left:10px;top:144px;width:75px;height:1px;background:#000000;"></div>
<div style="left:84px;top:123px;width:1px;height:22px;background:#000000;"></div>
<span class="t" style="left:10.0px;top:127px;width:75px;text-align:center;font:12px 'Liberation Sans';line-height:15px;letter-spacing:0px">Graph</span>
<div style="left:10px;top:145px;width:75px;height:1px;background:#ffffff;"></div>
<div style="left:10px;top:145px;width:1px;height:22px;background:#ffffff;"></div>
<div style="left:10px;top:166px;width:75px;height:1px;background:#000000;"></div>
<div style="left:84px;top:145px;width:1px;height:22px;background:#000000;"></div>
<span class="t" style="left:10.1px;top:149px;width:75px;text-align:center;font:12px 'Liberation Sans';line-height:15px;letter-spacing:0.2px">Trace</span>
<div style="left:10px;top:167px;width:75px;height:1px;background:#ffffff;"></div>
<div style="left:10px;top:167px;width:1px;height:22px;background:#ffffff;"></div>
<div style="left:10px;top:188px;width:75px;height:1px;background:#000000;"></div>
<div style="left:84px;top:167px;width:1px;height:22px;background:#000000;"></div>
<span class="t" style="left:10.125px;top:171px;width:75px;text-align:center;font:12px 'Liberation Sans';line-height:15px;letter-spacing:0.25px">Analysis</span>
<div style="left:92px;top:74px;width:1px;height:336px;background:#000000;"></div>
<div style="left:93px;top:74px;width:541px;height:1px;background:#808080;"></div>
<div style="left:93px;top:74px;width:1px;height:336px;background:#808080;"></div>
<div style="left:94px;top:75px;width:539px;height:1px;background:#000000;"></div>
<div style="left:94px;top:75px;width:1px;height:334px;background:#000000;"></div>
<div style="left:93px;top:409px;width:541px;height:1px;background:#ffffff;"></div>
<div style="left:633px;top:74px;width:1px;height:336px;background:#ffffff;"></div>
<div style="left:94px;top:408px;width:539px;height:1px;background:#dfdfdf;"></div>
<div style="left:632px;top:75px;width:1px;height:334px;background:#dfdfdf;"></div>
<div style="left:95px;top:76px;width:537px;height:332px;background:#fff;"></div>
<div style="left:105px;top:89px;width:6px;height:61px;background:#c0c0c0;"></div>
<div style="left:4px;top:410px;width:630px;height:1px;background:#808080;"></div>
<div style="left:4px;top:411px;width:630px;height:1px;background:#ffffff;"></div>
<div style="left:4px;top:432px;width:630px;height:1px;background:#808080;"></div>
<div style="left:4px;top:433px;width:630px;height:1px;background:#ffffff;"></div>
<div style="left:4px;top:453px;width:630px;height:1px;background:#808080;"></div>
<div style="left:4px;top:454px;width:630px;height:1px;background:#ffffff;"></div>
<span class="t" style="left:9px;top:415px;font:12px 'Liberation Sans';color:#000;line-height:15px">Mean: 444.22 StdDev: 0.09 #A: 17 #B: 17 from 17/17 peaks</span>
<span class="t" style="left:9px;top:437px;font:12px 'Liberation Sans';color:#000;line-height:15px">Ready.</span>
<svg style="left:120px;top:79px" width="27" height="9" shape-rendering="crispEdges" fill="#000"><rect x="3" y="0" width="1" height="1"/><rect x="2" y="1" width="2" height="1"/><rect x="1" y="2" width="1" height="1"/><rect x="3" y="2" width="1" height="1"/><rect x="3" y="3" width="1" height="1"/><rect x="3" y="4" width="1" height="1"/><rect x="3" y="5" width="1" height="1"/><rect x="3" y="6" width="1" height="1"/><rect x="3" y="7" width="1" height="1"/><rect x="3" y="8" width="1" height="1"/><rect x="21" y="0" width="1" height="1"/><rect x="20" y="1" width="1" height="1"/><rect x="22" y="1" width="1" height="1"/><rect x="20" y="2" width="1" height="1"/><rect x="22" y="2" width="1" height="1"/><rect x="20" y="3" width="1" height="1"/><rect x="22" y="3" width="1" height="1"/><rect x="19" y="4" width="1" height="1"/><rect x="23" y="4" width="1" height="1"/><rect x="19" y="5" width="5" height="1"/><rect x="19" y="6" width="1" height="1"/><rect x="23" y="6" width="1" height="1"/><rect x="18" y="7" width="1" height="1"/><rect x="24" y="7" width="1" height="1"/><rect x="18" y="8" width="1" height="1"/><rect x="24" y="8" width="1" height="1"/></svg>
<div style="left:120px;top:89px;width:27px;height:62px;box-sizing:border-box;border:1px solid #000"></div>
<div style="left:121px;top:138px;width:25px;height:1px;background:#b0b0b0;"></div>
<svg style="left:120px;top:89px" width="26" height="61" shape-rendering="crispEdges"><path d="M1.5 60.5 L2.5 60.5 L3.5 60.5 L4.5 60.5 L5.5 60.5 L6.5 60.5 L7.5 59.5 L8.5 59.5 L9.5 59.5 L10.5 59.5 L11.5 58.5 L12.5 56.5 L13.5 53.5 L14.5 48.5 L15.5 44.5 L16.5 39.5 L17.5 37.5 L18.5 38.5 L19.5 41.5 L20.5 45.5 L21.5 49.5 L22.5 52.5 L23.5 55.5 L24.5 56.5 L25.5 56.5 L26.5 57.5" fill="none" stroke="#000080"/></svg>
<svg style="left:149px;top:79px" width="27" height="9" shape-rendering="crispEdges" fill="#000"><rect x="2" y="0" width="3" height="1"/><rect x="1" y="1" width="1" height="1"/><rect x="5" y="1" width="1" height="1"/><rect x="5" y="2" width="1" height="1"/><rect x="5" y="3" width="1" height="1"/><rect x="4" y="4" width="1" height="1"/><rect x="3" y="5" width="1" height="1"/><rect x="2" y="6" width="1" height="1"/><rect x="1" y="7" width="1" height="1"/><rect x="1" y="8" width="5" height="1"/><rect x="19" y="0" width="5" height="1"/><rect x="19" y="1" width="1" height="1"/><rect x="24" y="1" width="1" height="1"/><rect x="19" y="2" width="1" height="1"/><rect x="24" y="2" width="1" height="1"/><rect x="19" y="3" width="1" height="1"/><rect x="24" y="3" width="1" height="1"/><rect x="19" y="4" width="5" height="1"/><rect x="19" y="5" width="1" height="1"/><rect x="24" y="5" width="1" height="1"/><rect x="19" y="6" width="1" height="1"/><rect x="24" y="6" width="1" height="1"/><rect x="19" y="7" width="1" height="1"/><rect x="24" y="7" width="1" height="1"/><rect x="19" y="8" width="5" height="1"/></svg>
<div style="left:149px;top:89px;width:27px;height:62px;box-sizing:border-box;border:1px solid #000"></div>
<div style="left:150px;top:138px;width:25px;height:1px;background:#b0b0b0;"></div>
<svg style="left:149px;top:89px" width="26" height="61" shape-rendering="crispEdges"><path d="M1 60.5 L26 60.5" fill="none" stroke="#000080"/></svg>
<svg style="left:178px;top:79px" width="27" height="9" shape-rendering="crispEdges" fill="#000"><rect x="2" y="0" width="3" height="1"/><rect x="1" y="1" width="1" height="1"/><rect x="5" y="1" width="1" height="1"/><rect x="5" y="2" width="1" height="1"/><rect x="5" y="3" width="1" height="1"/><rect x="3" y="4" width="2" height="1"/><rect x="5" y="5" width="1" height="1"/><rect x="5" y="6" width="1" height="1"/><rect x="1" y="7" width="1" height="1"/><rect x="5" y="7" width="1" height="1"/><rect x="2" y="8" width="3" height="1"/><rect x="21" y="0" width="1" height="1"/><rect x="20" y="1" width="1" height="1"/><rect x="22" y="1" width="1" height="1"/><rect x="20" y="2" width="1" height="1"/><rect x="22" y="2" width="1" height="1"/><rect x="20" y="3" width="1" height="1"/><rect x="22" y="3" width="1" height="1"/><rect x="19" y="4" width="1" height="1"/><rect x="23" y="4" width="1" height="1"/><rect x="19" y="5" width="5" height="1"/><rect x="19" y="6" width="1" height="1"/><rect x="23" y="6" width="1" height="1"/><rect x="18" y="7" width="1" height="1"/><rect x="24" y="7" width="1" height="1"/><rect x="18" y="8" width="1" height="1"/><rect x="24" y="8" width="1" height="1"/></svg>
<div style="left:178px;top:89px;width:27px;height:62px;box-sizing:border-box;border:1px solid #000"></div>
<div style="left:179px;top:138px;width:25px;height:1px;background:#b0b0b0;"></div>
<svg style="left:178px;top:89px" width="26" height="61" shape-rendering="crispEdges"><path d="M1.5 60.5 L2.5 60.5 L3.5 59.5 L4.5 59.5 L5.5 58.5 L6.5 57.5 L7.5 56.5 L8.5 56.5 L9.5 55.5 L10.5 53.5 L11.5 51.5 L12.5 48.5 L13.5 43.5 L14.5 38.5 L15.5 33.5 L16.5 31.5 L17.5 33.5 L18.5 36.5 L19.5 41.5 L20.5 46.5 L21.5 50.5 L22.5 53.5 L23.5 55.5 L24.5 56.5 L25.5 56.5 L26.5 56.5" fill="none" stroke="#000080"/></svg>
<svg style="left:207px;top:79px" width="27" height="9" shape-rendering="crispEdges" fill="#000"><rect x="4" y="0" width="1" height="1"/><rect x="3" y="1" width="2" height="1"/><rect x="3" y="2" width="2" height="1"/><rect x="2" y="3" width="1" height="1"/><rect x="4" y="3" width="1" height="1"/><rect x="2" y="4" width="1" height="1"/><rect x="4" y="4" width="1" height="1"/><rect x="1" y="5" width="1" height="1"/><rect x="4" y="5" width="1" height="1"/><rect x="1" y="6" width="5" height="1"/><rect x="4" y="7" width="1" height="1"/><rect x="4" y="8" width="1" height="1"/><rect x="19" y="0" width="5" height="1"/><rect x="19" y="1" width="1" height="1"/><rect x="24" y="1" width="1" height="1"/><rect x="19" y="2" width="1" height="1"/><rect x="24" y="2" width="1" height="1"/><rect x="19" y="3" width="1" height="1"/><rect x="24" y="3" width="1" height="1"/><rect x="19" y="4" width="5" height="1"/><rect x="19" y="5" width="1" height="1"/><rect x="24" y="5" width="1" height="1"/><rect x="19" y="6" width="1" height="1"/><rect x="24" y="6" width="1" height="1"/><rect x="19" y="7" width="1" height="1"/><rect x="24" y="7" width="1" height="1"/><rect x="19" y="8" width="5" height="1"/></svg>
<div style="left:207px;top:89px;width:27px;height:62px;box-sizing:border-box;border:1px solid #000"></div>
<div style="left:208px;top:138px;width:25px;height:1px;background:#b0b0b0;"></div>
<svg style="left:207px;top:89px" width="26" height="61" shape-rendering="crispEdges"><path d="M1 60.5 L26 60.5" fill="none" stroke="#000080"/></svg>
<svg style="left:236px;top:79px" width="27" height="9" shape-rendering="crispEdges" fill="#000"><rect x="2" y="0" width="4" height="1"/><rect x="1" y="1" width="1" height="1"/><rect x="1" y="2" width="1" height="1"/><rect x="1" y="3" width="4" height="1"/><rect x="5" y="4" width="1" height="1"/><rect x="5" y="5" width="1" height="1"/><rect x="5" y="6" width="1" height="1"/><rect x="1" y="7" width="1" height="1"/><rect x="5" y="7" width="1" height="1"/><rect x="2" y="8" width="3" height="1"/><rect x="21" y="0" width="1" height="1"/><rect x="20" y="1" width="1" height="1"/><rect x="22" y="1" width="1" height="1"/><rect x="20" y="2" width="1" height="1"/><rect x="22" y="2" width="1" height="1"/><rect x="20" y="3" width="1" height="1"/><rect x="22" y="3" width="1" height="1"/><rect x="19" y="4" width="1" height="1"/><rect x="23" y="4" width="1" height="1"/><rect x="19" y="5" width="5" height="1"/><rect x="19" y="6" width="1" height="1"/><rect x="23" y="6" width="1" height="1"/><rect x="18" y="7" width="1" height="1"/><rect x="24" y="7" width="1" height="1"/><rect x="18" y="8" width="1" height="1"/><rect x="24" y="8" width="1" height="1"/></svg>
<div style="left:236px;top:89px;width:27px;height:62px;box-sizing:border-box;border:1px solid #000"></div>
<div style="left:237px;top:138px;width:25px;height:1px;background:#b0b0b0;"></div>
<svg style="left:236px;top:89px" width="26" height="61" shape-rendering="crispEdges"><path d="M1.5 59.5 L2.5 58.5 L3.5 58.5 L4.5 57.5 L5.5 56.5 L6.5 56.5 L7.5 55.5 L8.5 54.5 L9.5 53.5 L10.5 49.5 L11.5 45.5 L12.5 38.5 L13.5 29.5 L14.5 18.5 L15.5 9.5 L16.5 2.5 L17.5 1.5 L18.5 6.5 L19.5 15.5 L20.5 25.5 L21.5 34.5 L22.5 42.5 L23.5 47.5 L24.5 48.5 L25.5 50.5 L26.5 51.5" fill="none" stroke="#000080"/></svg>
<svg style="left:265px;top:79px" width="27" height="9" shape-rendering="crispEdges" fill="#000"><rect x="2" y="0" width="3" height="1"/><rect x="1" y="1" width="1" height="1"/><rect x="5" y="1" width="1" height="1"/><rect x="1" y="2" width="1" height="1"/><rect x="1" y="3" width="1" height="1"/><rect x="3" y="3" width="2" height="1"/><rect x="1" y="4" width="2" height="1"/><rect x="5" y="4" width="1" height="1"/><rect x="1" y="5" width="1" height="1"/><rect x="5" y="5" width="1" height="1"/><rect x="1" y="6" width="1" height="1"/><rect x="5" y="6" width="1" height="1"/><rect x="1" y="7" width="1" height="1"/><rect x="5" y="7" width="1" height="1"/><rect x="2" y="8" width="3" height="1"/><rect x="21" y="0" width="1" height="1"/><rect x="20" y="1" width="1" height="1"/><rect x="22" y="1" width="1" height="1"/><rect x="20" y="2" width="1" height="1"/><rect x="22" y="2" width="1" height="1"/><rect x="20" y="3" width="1" height="1"/><rect x="22" y="3" width="1" height="1"/><rect x="19" y="4" width="1" height="1"/><rect x="23" y="4" width="1" height="1"/><rect x="19" y="5" width="5" height="1"/><rect x="19" y="6" width="1" height="1"/><rect x="23" y="6" width="1" height="1"/><rect x="18" y="7" width="1" height="1"/><rect x="24" y="7" width="1" height="1"/><rect x="18" y="8" width="1" height="1"/><rect x="24" y="8" width="1" height="1"/></svg>
<div style="left:265px;top:89px;width:27px;height:62px;box-sizing:border-box;border:1px solid #000"></div>
<div style="left:266px;top:138px;width:25px;height:1px;background:#b0b0b0;"></div>
<svg style="left:265px;top:89px" width="26" height="61" shape-rendering="crispEdges"><path d="M1.5 60.5 L2.5 60.5 L3.5 60.5 L4.5 60.5 L5.5 60.5 L6.5 59.5 L7.5 59.5 L8.5 59.5 L9.5 59.5 L10.5 58.5 L11.5 57.5 L12.5 55.5 L13.5 50.5 L14.5 44.5 L15.5 38.5 L16.5 32.5 L17.5 29.5 L18.5 31.5 L19.5 35.5 L20.5 39.5 L21.5 45.5 L22.5 49.5 L23.5 53.5 L24.5 55.5 L25.5 55.5 L26.5 56.5" fill="none" stroke="#000080"/></svg>
<svg style="left:294px;top:79px" width="27" height="9" shape-rendering="crispEdges" fill="#000"><rect x="1" y="0" width="5" height="1"/><rect x="4" y="1" width="1" height="1"/><rect x="4" y="2" width="1" height="1"/><rect x="3" y="3" width="1" height="1"/><rect x="3" y="4" width="1" height="1"/><rect x="3" y="5" width="1" height="1"/><rect x="2" y="6" width="1" height="1"/><rect x="2" y="7" width="1" height="1"/><rect x="2" y="8" width="1" height="1"/><rect x="21" y="0" width="1" height="1"/><rect x="20" y="1" width="1" height="1"/><rect x="22" y="1" width="1" height="1"/><rect x="20" y="2" width="1" height="1"/><rect x="22" y="2" width="1" height="1"/><rect x="20" y="3" width="1" height="1"/><rect x="22" y="3" width="1" height="1"/><rect x="19" y="4" width="1" height="1"/><rect x="23" y="4" width="1" height="1"/><rect x="19" y="5" width="5" height="1"/><rect x="19" y="6" width="1" height="1"/><rect x="23" y="6" width="1" height="1"/><rect x="18" y="7" width="1" height="1"/><rect x="24" y="7" width="1" height="1"/><rect x="18" y="8" width="1" height="1"/><rect x="24" y="8" width="1" height="1"/></svg>
<div style="left:294px;top:89px;width:27px;height:62px;box-sizing:border-box;border:1px solid #000"></div>
<div style="left:295px;top:138px;width:25px;height:1px;background:#b0b0b0;"></div>
<svg style="left:294px;top:89px" width="26" height="61" shape-rendering="crispEdges"><path d="M1.5 60.5 L2.5 60.5 L3.5 60.5 L4.5 59.5 L5.5 59.5 L6.5 59.5 L7.5 59.5 L8.5 59.5 L9.5 58.5 L10.5 57.5 L11.5 54.5 L12.5 49.5 L13.5 42.5 L14.5 34.5 L15.5 27.5 L16.5 24.5 L17.5 26.5 L18.5 31.5 L19.5 36.5 L20.5 42.5 L21.5 47.5 L22.5 51.5 L23.5 54.5 L24.5 54.5 L25.5 55.5 L26.5 55.5" fill="none" stroke="#000080"/></svg>
<svg style="left:323px;top:79px" width="27" height="9" shape-rendering="crispEdges" fill="#000"><rect x="2" y="0" width="3" height="1"/><rect x="1" y="1" width="1" height="1"/><rect x="5" y="1" width="1" height="1"/><rect x="1" y="2" width="1" height="1"/><rect x="5" y="2" width="1" height="1"/><rect x="1" y="3" width="1" height="1"/><rect x="5" y="3" width="1" height="1"/><rect x="2" y="4" width="3" height="1"/><rect x="1" y="5" width="1" height="1"/><rect x="5" y="5" width="1" height="1"/><rect x="1" y="6" width="1" height="1"/><rect x="5" y="6" width="1" height="1"/><rect x="1" y="7" width="1" height="1"/><rect x="5" y="7" width="1" height="1"/><rect x="2" y="8" width="3" height="1"/><rect x="21" y="0" width="1" height="1"/><rect x="20" y="1" width="1" height="1"/><rect x="22" y="1" width="1" height="1"/><rect x="20" y="2" width="1" height="1"/><rect x="22" y="2" width="1" height="1"/><rect x="20" y="3" width="1" height="1"/><rect x="22" y="3" width="1" height="1"/><rect x="19" y="4" width="1" height="1"/><rect x="23" y="4" width="1" height="1"/><rect x="19" y="5" width="5" height="1"/><rect x="19" y="6" width="1" height="1"/><rect x="23" y="6" width="1" height="1"/><rect x="18" y="7" width="1" height="1"/><rect x="24" y="7" width="1" height="1"/><rect x="18" y="8" width="1" height="1"/><rect x="24" y="8" width="1" height="1"/></svg>
<div style="left:323px;top:89px;width:27px;height:62px;box-sizing:border-box;border:1px solid #000"></div>
<div style="left:324px;top:138px;width:25px;height:1px;background:#b0b0b0;"></div>
<svg style="left:323px;top:89px" width="26" height="61" shape-rendering="crispEdges"><path d="M1.5 60.5 L2.5 60.5 L3.5 60.5 L4.5 60.5 L5.5 60.5 L6.5 59.5 L7.5 59.5 L8.5 59.5 L9.5 59.5 L10.5 58.5 L11.5 56.5 L12.5 52.5 L13.5 48.5 L14.5 43.5 L15.5 38.5 L16.5 36.5 L17.5 37.5 L18.5 40.5 L19.5 44.5 L20.5 48.5 L21.5 51.5 L22.5 54.5 L23.5 56.5 L24.5 56.5 L25.5 57.5 L26.5 57.5" fill="none" stroke="#000080"/></svg>
<svg style="left:352px;top:79px" width="27" height="9" shape-rendering="crispEdges" fill="#000"><rect x="2" y="0" width="3" height="1"/><rect x="1" y="1" width="1" height="1"/><rect x="5" y="1" width="1" height="1"/><rect x="1" y="2" width="1" height="1"/><rect x="5" y="2" width="1" height="1"/><rect x="1" y="3" width="1" height="1"/><rect x="5" y="3" width="1" height="1"/><rect x="1" y="4" width="1" height="1"/><rect x="4" y="4" width="2" height="1"/><rect x="2" y="5" width="2" height="1"/><rect x="5" y="5" width="1" height="1"/><rect x="5" y="6" width="1" height="1"/><rect x="1" y="7" width="1" height="1"/><rect x="5" y="7" width="1" height="1"/><rect x="2" y="8" width="3" height="1"/><rect x="19" y="0" width="5" height="1"/><rect x="19" y="1" width="1" height="1"/><rect x="24" y="1" width="1" height="1"/><rect x="19" y="2" width="1" height="1"/><rect x="24" y="2" width="1" height="1"/><rect x="19" y="3" width="1" height="1"/><rect x="24" y="3" width="1" height="1"/><rect x="19" y="4" width="5" height="1"/><rect x="19" y="5" width="1" height="1"/><rect x="24" y="5" width="1" height="1"/><rect x="19" y="6" width="1" height="1"/><rect x="24" y="6" width="1" height="1"/><rect x="19" y="7" width="1" height="1"/><rect x="24" y="7" width="1" height="1"/><rect x="19" y="8" width="5" height="1"/></svg>
<div style="left:352px;top:89px;width:27px;height:62px;box-sizing:border-box;border:1px solid #000"></div>
<div style="left:353px;top:138px;width:25px;height:1px;background:#b0b0b0;"></div>
<svg style="left:352px;top:89px" width="26" height="61" shape-rendering="crispEdges"><path d="M1 60.5 L26 60.5" fill="none" stroke="#000080"/></svg>
<svg style="left:381px;top:79px" width="27" height="9" shape-rendering="crispEdges" fill="#000"><rect x="3" y="0" width="1" height="1"/><rect x="2" y="1" width="2" height="1"/><rect x="1" y="2" width="1" height="1"/><rect x="3" y="2" width="1" height="1"/><rect x="3" y="3" width="1" height="1"/><rect x="3" y="4" width="1" height="1"/><rect x="3" y="5" width="1" height="1"/><rect x="3" y="6" width="1" height="1"/><rect x="3" y="7" width="1" height="1"/><rect x="3" y="8" width="1" height="1"/><rect x="9" y="0" width="3" height="1"/><rect x="8" y="1" width="1" height="1"/><rect x="12" y="1" width="1" height="1"/><rect x="8" y="2" width="1" height="1"/><rect x="12" y="2" width="1" height="1"/><rect x="8" y="3" width="1" height="1"/><rect x="12" y="3" width="1" height="1"/><rect x="8" y="4" width="1" height="1"/><rect x="12" y="4" width="1" height="1"/><rect x="8" y="5" width="1" height="1"/><rect x="12" y="5" width="1" height="1"/><rect x="8" y="6" width="1" height="1"/><rect x="12" y="6" width="1" height="1"/><rect x="8" y="7" width="1" height="1"/><rect x="12" y="7" width="1" height="1"/><rect x="9" y="8" width="3" height="1"/><rect x="21" y="0" width="1" height="1"/><rect x="20" y="1" width="1" height="1"/><rect x="22" y="1" width="1" height="1"/><rect x="20" y="2" width="1" height="1"/><rect x="22" y="2" width="1" height="1"/><rect x="20" y="3" width="1" height="1"/><rect x="22" y="3" width="1" height="1"/><rect x="19" y="4" width="1" height="1"/><rect x="23" y="4" width="1" height="1"/><rect x="19" y="5" width="5" height="1"/><rect x="19" y="6" width="1" height="1"/><rect x="23" y="6" width="1" height="1"/><rect x="18" y="7" width="1" height="1"/><rect x="24" y="7" width="1" height="1"/><rect x="18" y="8" width="1" height="1"/><rect x="24" y="8" width="1" height="1"/></svg>
<div style="left:381px;top:89px;width:27px;height:62px;box-sizing:border-box;border:1px solid #000"></div>
<div style="left:382px;top:138px;width:25px;height:1px;background:#b0b0b0;"></div>
<svg style="left:381px;top:89px" width="26" height="61" shape-rendering="crispEdges"><path d="M1.5 60.5 L2.5 60.5 L3.5 60.5 L4.5 60.5 L5.5 60.5 L6.5 59.5 L7.5 59.5 L8.5 59.5 L9.5 59.5 L10.5 58.5 L11.5 56.5 L12.5 53.5 L13.5 49.5 L14.5 44.5 L15.5 40.5 L16.5 38.5 L17.5 39.5 L18.5 42.5 L19.5 45.5 L20.5 49.5 L21.5 52.5 L22.5 55.5 L23.5 56.5 L24.5 57.5 L25.5 57.5 L26.5 57.5" fill="none" stroke="#000080"/></svg>
<svg style="left:410px;top:79px" width="27" height="9" shape-rendering="crispEdges" fill="#000"><rect x="3" y="0" width="1" height="1"/><rect x="2" y="1" width="2" height="1"/><rect x="1" y="2" width="1" height="1"/><rect x="3" y="2" width="1" height="1"/><rect x="3" y="3" width="1" height="1"/><rect x="3" y="4" width="1" height="1"/><rect x="3" y="5" width="1" height="1"/><rect x="3" y="6" width="1" height="1"/><rect x="3" y="7" width="1" height="1"/><rect x="3" y="8" width="1" height="1"/><rect x="10" y="0" width="1" height="1"/><rect x="9" y="1" width="2" height="1"/><rect x="8" y="2" width="1" height="1"/><rect x="10" y="2" width="1" height="1"/><rect x="10" y="3" width="1" height="1"/><rect x="10" y="4" width="1" height="1"/><rect x="10" y="5" width="1" height="1"/><rect x="10" y="6" width="1" height="1"/><rect x="10" y="7" width="1" height="1"/><rect x="10" y="8" width="1" height="1"/><rect x="19" y="0" width="5" height="1"/><rect x="19" y="1" width="1" height="1"/><rect x="24" y="1" width="1" height="1"/><rect x="19" y="2" width="1" height="1"/><rect x="24" y="2" width="1" height="1"/><rect x="19" y="3" width="1" height="1"/><rect x="24" y="3" width="1" height="1"/><rect x="19" y="4" width="5" height="1"/><rect x="19" y="5" width="1" height="1"/><rect x="24" y="5" width="1" height="1"/><rect x="19" y="6" width="1" height="1"/><rect x="24" y="6" width="1" height="1"/><rect x="19" y="7" width="1" height="1"/><rect x="24" y="7" width="1" height="1"/><rect x="19" y="8" width="5" height="1"/></svg>
<div style="left:410px;top:89px;width:27px;height:62px;box-sizing:border-box;border:1px solid #000"></div>
<div style="left:411px;top:138px;width:25px;height:1px;background:#b0b0b0;"></div>
<svg style="left:410px;top:89px" width="26" height="61" shape-rendering="crispEdges"><path d="M1 60.5 L26 60.5" fill="none" stroke="#000080"/></svg>
<svg style="left:439px;top:79px" width="27" height="9" shape-rendering="crispEdges" fill="#000"><rect x="3" y="0" width="1" height="1"/><rect x="2" y="1" width="2" height="1"/><rect x="1" y="2" width="1" height="1"/><rect x="3" y="2" width="1" height="1"/><rect x="3" y="3" width="1" height="1"/><rect x="3" y="4" width="1" height="1"/><rect x="3" y="5" width="1" height="1"/><rect x="3" y="6" width="1" height="1"/><rect x="3" y="7" width="1" height="1"/><rect x="3" y="8" width="1" height="1"/><rect x="9" y="0" width="3" height="1"/><rect x="8" y="1" width="1" height="1"/><rect x="12" y="1" width="1" height="1"/><rect x="12" y="2" width="1" height="1"/><rect x="12" y="3" width="1" height="1"/><rect x="11" y="4" width="1" height="1"/><rect x="10" y="5" width="1" height="1"/><rect x="9" y="6" width="1" height="1"/><rect x="8" y="7" width="1" height="1"/><rect x="8" y="8" width="5" height="1"/><rect x="19" y="0" width="5" height="1"/><rect x="19" y="1" width="1" height="1"/><rect x="24" y="1" width="1" height="1"/><rect x="19" y="2" width="1" height="1"/><rect x="24" y="2" width="1" height="1"/><rect x="19" y="3" width="1" height="1"/><rect x="24" y="3" width="1" height="1"/><rect x="19" y="4" width="5" height="1"/><rect x="19" y="5" width="1" height="1"/><rect x="24" y="5" width="1" height="1"/><rect x="19" y="6" width="1" height="1"/><rect x="24" y="6" width="1" height="1"/><rect x="19" y="7" width="1" height="1"/><rect x="24" y="7" width="1" height="1"/><rect x="19" y="8" width="5" height="1"/></svg>
<div style="left:439px;top:89px;width:27px;height:62px;box-sizing:border-box;border:1px solid #000"></div>
<div style="left:440px;top:138px;width:25px;height:1px;background:#b0b0b0;"></div>
<svg style="left:439px;top:89px" width="26" height="61" shape-rendering="crispEdges"><path d="M1 60.5 L26 60.5" fill="none" stroke="#000080"/></svg>
<svg style="left:468px;top:79px" width="27" height="9" shape-rendering="crispEdges" fill="#000"><rect x="3" y="0" width="1" height="1"/><rect x="2" y="1" width="2" height="1"/><rect x="1" y="2" width="1" height="1"/><rect x="3" y="2" width="1" height="1"/><rect x="3" y="3" width="1" height="1"/><rect x="3" y="4" width="1" height="1"/><rect x="3" y="5" width="1" height="1"/><rect x="3" y="6" width="1" height="1"/><rect x="3" y="7" width="1" height="1"/><rect x="3" y="8" width="1" height="1"/><rect x="9" y="0" width="3" height="1"/><rect x="8" y="1" width="1" height="1"/><rect x="12" y="1" width="1" height="1"/><rect x="12" y="2" width="1" height="1"/><rect x="12" y="3" width="1" height="1"/><rect x="10" y="4" width="2" height="1"/><rect x="12" y="5" width="1" height="1"/><rect x="12" y="6" width="1" height="1"/><rect x="8" y="7" width="1" height="1"/><rect x="12" y="7" width="1" height="1"/><rect x="9" y="8" width="3" height="1"/><rect x="19" y="0" width="5" height="1"/><rect x="19" y="1" width="1" height="1"/><rect x="24" y="1" width="1" height="1"/><rect x="19" y="2" width="1" height="1"/><rect x="24" y="2" width="1" height="1"/><rect x="19" y="3" width="1" height="1"/><rect x="24" y="3" width="1" height="1"/><rect x="19" y="4" width="5" height="1"/><rect x="19" y="5" width="1" height="1"/><rect x="24" y="5" width="1" height="1"/><rect x="19" y="6" width="1" height="1"/><rect x="24" y="6" width="1" height="1"/><rect x="19" y="7" width="1" height="1"/><rect x="24" y="7" width="1" height="1"/><rect x="19" y="8" width="5" height="1"/></svg>
<div style="left:468px;top:89px;width:27px;height:62px;box-sizing:border-box;border:1px solid #000"></div>
<div style="left:469px;top:138px;width:25px;height:1px;background:#b0b0b0;"></div>
<svg style="left:468px;top:89px" width="26" height="61" shape-rendering="crispEdges"><path d="M1 60.5 L26 60.5" fill="none" stroke="#000080"/></svg>
<svg style="left:497px;top:79px" width="27" height="9" shape-rendering="crispEdges" fill="#000"><rect x="3" y="0" width="1" height="1"/><rect x="2" y="1" width="2" height="1"/><rect x="1" y="2" width="1" height="1"/><rect x="3" y="2" width="1" height="1"/><rect x="3" y="3" width="1" height="1"/><rect x="3" y="4" width="1" height="1"/><rect x="3" y="5" width="1" height="1"/><rect x="3" y="6" width="1" height="1"/><rect x="3" y="7" width="1" height="1"/><rect x="3" y="8" width="1" height="1"/><rect x="11" y="0" width="1" height="1"/><rect x="10" y="1" width="2" height="1"/><rect x="10" y="2" width="2" height="1"/><rect x="9" y="3" width="1" height="1"/><rect x="11" y="3" width="1" height="1"/><rect x="9" y="4" width="1" height="1"/><rect x="11" y="4" width="1" height="1"/><rect x="8" y="5" width="1" height="1"/><rect x="11" y="5" width="1" height="1"/><rect x="8" y="6" width="5" height="1"/><rect x="11" y="7" width="1" height="1"/><rect x="11" y="8" width="1" height="1"/><rect x="21" y="0" width="1" height="1"/><rect x="20" y="1" width="1" height="1"/><rect x="22" y="1" width="1" height="1"/><rect x="20" y="2" width="1" height="1"/><rect x="22" y="2" width="1" height="1"/><rect x="20" y="3" width="1" height="1"/><rect x="22" y="3" width="1" height="1"/><rect x="19" y="4" width="1" height="1"/><rect x="23" y="4" width="1" height="1"/><rect x="19" y="5" width="5" height="1"/><rect x="19" y="6" width="1" height="1"/><rect x="23" y="6" width="1" height="1"/><rect x="18" y="7" width="1" height="1"/><rect x="24" y="7" width="1" height="1"/><rect x="18" y="8" width="1" height="1"/><rect x="24" y="8" width="1" height="1"/></svg>
<div style="left:497px;top:89px;width:27px;height:62px;box-sizing:border-box;border:1px solid #000"></div>
<div style="left:498px;top:138px;width:25px;height:1px;background:#b0b0b0;"></div>
<svg style="left:497px;top:89px" width="26" height="61" shape-rendering="crispEdges"><path d="M1.5 60.5 L2.5 60.5 L3.5 60.5 L4.5 59.5 L5.5 59.5 L6.5 59.5 L7.5 59.5 L8.5 58.5 L9.5 58.5 L10.5 56.5 L11.5 53.5 L12.5 48.5 L13.5 40.5 L14.5 32.5 L15.5 25.5 L16.5 21.5 L17.5 23.5 L18.5 28.5 L19.5 34.5 L20.5 41.5 L21.5 46.5 L22.5 51.5 L23.5 53.5 L24.5 54.5 L25.5 54.5 L26.5 55.5" fill="none" stroke="#000080"/></svg>
<svg style="left:526px;top:79px" width="27" height="9" shape-rendering="crispEdges" fill="#000"><rect x="3" y="0" width="1" height="1"/><rect x="2" y="1" width="2" height="1"/><rect x="1" y="2" width="1" height="1"/><rect x="3" y="2" width="1" height="1"/><rect x="3" y="3" width="1" height="1"/><rect x="3" y="4" width="1" height="1"/><rect x="3" y="5" width="1" height="1"/><rect x="3" y="6" width="1" height="1"/><rect x="3" y="7" width="1" height="1"/><rect x="3" y="8" width="1" height="1"/><rect x="9" y="0" width="4" height="1"/><rect x="8" y="1" width="1" height="1"/><rect x="8" y="2" width="1" height="1"/><rect x="8" y="3" width="4" height="1"/><rect x="12" y="4" width="1" height="1"/><rect x="12" y="5" width="1" height="1"/><rect x="12" y="6" width="1" height="1"/><rect x="8" y="7" width="1" height="1"/><rect x="12" y="7" width="1" height="1"/><rect x="9" y="8" width="3" height="1"/><rect x="19" y="0" width="5" height="1"/><rect x="19" y="1" width="1" height="1"/><rect x="24" y="1" width="1" height="1"/><rect x="19" y="2" width="1" height="1"/><rect x="24" y="2" width="1" height="1"/><rect x="19" y="3" width="1" height="1"/><rect x="24" y="3" width="1" height="1"/><rect x="19" y="4" width="5" height="1"/><rect x="19" y="5" width="1" height="1"/><rect x="24" y="5" width="1" height="1"/><rect x="19" y="6" width="1" height="1"/><rect x="24" y="6" width="1" height="1"/><rect x="19" y="7" width="1" height="1"/><rect x="24" y="7" width="1" height="1"/><rect x="19" y="8" width="5" height="1"/></svg>
<div style="left:526px;top:89px;width:27px;height:62px;box-sizing:border-box;border:1px solid #000"></div>
<div style="left:527px;top:138px;width:25px;height:1px;background:#b0b0b0;"></div>
<svg style="left:526px;top:89px" width="26" height="61" shape-rendering="crispEdges"><path d="M1 60.5 L26 60.5" fill="none" stroke="#000080"/></svg>
<svg style="left:555px;top:79px" width="27" height="9" shape-rendering="crispEdges" fill="#000"><rect x="3" y="0" width="1" height="1"/><rect x="2" y="1" width="2" height="1"/><rect x="1" y="2" width="1" height="1"/><rect x="3" y="2" width="1" height="1"/><rect x="3" y="3" width="1" height="1"/><rect x="3" y="4" width="1" height="1"/><rect x="3" y="5" width="1" height="1"/><rect x="3" y="6" width="1" height="1"/><rect x="3" y="7" width="1" height="1"/><rect x="3" y="8" width="1" height="1"/><rect x="9" y="0" width="3" height="1"/><rect x="8" y="1" width="1" height="1"/><rect x="12" y="1" width="1" height="1"/><rect x="8" y="2" width="1" height="1"/><rect x="8" y="3" width="1" height="1"/><rect x="10" y="3" width="2" height="1"/><rect x="8" y="4" width="2" height="1"/><rect x="12" y="4" width="1" height="1"/><rect x="8" y="5" width="1" height="1"/><rect x="12" y="5" width="1" height="1"/><rect x="8" y="6" width="1" height="1"/><rect x="12" y="6" width="1" height="1"/><rect x="8" y="7" width="1" height="1"/><rect x="12" y="7" width="1" height="1"/><rect x="9" y="8" width="3" height="1"/><rect x="19" y="0" width="5" height="1"/><rect x="19" y="1" width="1" height="1"/><rect x="24" y="1" width="1" height="1"/><rect x="19" y="2" width="1" height="1"/><rect x="24" y="2" width="1" height="1"/><rect x="19" y="3" width="1" height="1"/><rect x="24" y="3" width="1" height="1"/><rect x="19" y="4" width="5" height="1"/><rect x="19" y="5" width="1" height="1"/><rect x="24" y="5" width="1" height="1"/><rect x="19" y="6" width="1" height="1"/><rect x="24" y="6" width="1" height="1"/><rect x="19" y="7" width="1" height="1"/><rect x="24" y="7" width="1" height="1"/><rect x="19" y="8" width="5" height="1"/></svg>
<div style="left:555px;top:89px;width:27px;height:62px;box-sizing:border-box;border:1px solid #000"></div>
<div style="left:556px;top:138px;width:25px;height:1px;background:#b0b0b0;"></div>
<svg style="left:555px;top:89px" width="26" height="61" shape-rendering="crispEdges"><path d="M1 60.5 L26 60.5" fill="none" stroke="#000080"/></svg>
<svg style="left:584px;top:79px" width="27" height="9" shape-rendering="crispEdges" fill="#000"><rect x="3" y="0" width="1" height="1"/><rect x="2" y="1" width="2" height="1"/><rect x="1" y="2" width="1" height="1"/><rect x="3" y="2" width="1" height="1"/><rect x="3" y="3" width="1" height="1"/><rect x="3" y="4" width="1" height="1"/><rect x="3" y="5" width="1" height="1"/><rect x="3" y="6" width="1" height="1"/><rect x="3" y="7" width="1" height="1"/><rect x="3" y="8" width="1" height="1"/><rect x="8" y="0" width="5" height="1"/><rect x="11" y="1" width="1" height="1"/><rect x="11" y="2" width="1" height="1"/><rect x="10" y="3" width="1" height="1"/><rect x="10" y="4" width="1" height="1"/><rect x="10" y="5" width="1" height="1"/><rect x="9" y="6" width="1" height="1"/><rect x="9" y="7" width="1" height="1"/><rect x="9" y="8" width="1" height="1"/><rect x="21" y="0" width="1" height="1"/><rect x="20" y="1" width="1" height="1"/><rect x="22" y="1" width="1" height="1"/><rect x="20" y="2" width="1" height="1"/><rect x="22" y="2" width="1" height="1"/><rect x="20" y="3" width="1" height="1"/><rect x="22" y="3" width="1" height="1"/><rect x="19" y="4" width="1" height="1"/><rect x="23" y="4" width="1" height="1"/><rect x="19" y="5" width="5" height="1"/><rect x="19" y="6" width="1" height="1"/><rect x="23" y="6" width="1" height="1"/><rect x="18" y="7" width="1" height="1"/><rect x="24" y="7" width="1" height="1"/><rect x="18" y="8" width="1" height="1"/><rect x="24" y="8" width="1" height="1"/></svg>
<div style="left:584px;top:89px;width:27px;height:62px;box-sizing:border-box;border:1px solid #000"></div>
<div style="left:585px;top:138px;width:25px;height:1px;background:#b0b0b0;"></div>
<svg style="left:584px;top:89px" width="26" height="61" shape-rendering="crispEdges"><path d="M1.5 60.5 L2.5 60.5 L3.5 60.5 L4.5 60.5 L5.5 60.5 L6.5 59.5 L7.5 59.5 L8.5 59.5 L9.5 59.5 L10.5 58.5 L11.5 56.5 L12.5 52.5 L13.5 47.5 L14.5 42.5 L15.5 37.5 L16.5 35.5 L17.5 36.5 L18.5 40.5 L19.5 43.5 L20.5 48.5 L21.5 51.5 L22.5 54.5 L23.5 56.5 L24.5 56.5 L25.5 56.5 L26.5 57.5" fill="none" stroke="#000080"/></svg>
<svg style="left:120px;top:153px" width="27" height="9" shape-rendering="crispEdges" fill="#000"><rect x="3" y="0" width="1" height="1"/><rect x="2" y="1" width="2" height="1"/><rect x="1" y="2" width="1" height="1"/><rect x="3" y="2" width="1" height="1"/><rect x="3" y="3" width="1" height="1"/><rect x="3" y="4" width="1" height="1"/><rect x="3" y="5" width="1" height="1"/><rect x="3" y="6" width="1" height="1"/><rect x="3" y="7" width="1" height="1"/><rect x="3" y="8" width="1" height="1"/><rect x="9" y="0" width="3" height="1"/><rect x="8" y="1" width="1" height="1"/><rect x="12" y="1" width="1" height="1"/><rect x="8" y="2" width="1" height="1"/><rect x="12" y="2" width="1" height="1"/><rect x="8" y="3" width="1" height="1"/><rect x="12" y="3" width="1" height="1"/><rect x="9" y="4" width="3" height="1"/><rect x="8" y="5" width="1" height="1"/><rect x="12" y="5" width="1" height="1"/><rect x="8" y="6" width="1" height="1"/><rect x="12" y="6" width="1" height="1"/><rect x="8" y="7" width="1" height="1"/><rect x="12" y="7" width="1" height="1"/><rect x="9" y="8" width="3" height="1"/><rect x="19" y="0" width="5" height="1"/><rect x="19" y="1" width="1" height="1"/><rect x="24" y="1" width="1" height="1"/><rect x="19" y="2" width="1" height="1"/><rect x="24" y="2" width="1" height="1"/><rect x="19" y="3" width="1" height="1"/><rect x="24" y="3" width="1" height="1"/><rect x="19" y="4" width="5" height="1"/><rect x="19" y="5" width="1" height="1"/><rect x="24" y="5" width="1" height="1"/><rect x="19" y="6" width="1" height="1"/><rect x="24" y="6" width="1" height="1"/><rect x="19" y="7" width="1" height="1"/><rect x="24" y="7" width="1" height="1"/><rect x="19" y="8" width="5" height="1"/></svg>
<div style="left:120px;top:163px;width:27px;height:62px;box-sizing:border-box;border:1px solid #000"></div>
<div style="left:121px;top:212px;width:25px;height:1px;background:#b0b0b0;"></div>
<svg style="left:120px;top:163px" width="26" height="61" shape-rendering="crispEdges"><path d="M1 60.5 L26 60.5" fill="none" stroke="#000080"/></svg>
<svg style="left:149px;top:153px" width="27" height="9" shape-rendering="crispEdges" fill="#000"><rect x="3" y="0" width="1" height="1"/><rect x="2" y="1" width="2" height="1"/><rect x="1" y="2" width="1" height="1"/><rect x="3" y="2" width="1" height="1"/><rect x="3" y="3" width="1" height="1"/><rect x="3" y="4" width="1" height="1"/><rect x="3" y="5" width="1" height="1"/><rect x="3" y="6" width="1" height="1"/><rect x="3" y="7" width="1" height="1"/><rect x="3" y="8" width="1" height="1"/><rect x="9" y="0" width="3" height="1"/><rect x="8" y="1" width="1" height="1"/><rect x="12" y="1" width="1" height="1"/><rect x="8" y="2" width="1" height="1"/><rect x="12" y="2" width="1" height="1"/><rect x="8" y="3" width="1" height="1"/><rect x="12" y="3" width="1" height="1"/><rect x="8" y="4" width="1" height="1"/><rect x="11" y="4" width="2" height="1"/><rect x="9" y="5" width="2" height="1"/><rect x="12" y="5" width="1" height="1"/><rect x="12" y="6" width="1" height="1"/><rect x="8" y="7" width="1" height="1"/><rect x="12" y="7" width="1" height="1"/><rect x="9" y="8" width="3" height="1"/><rect x="19" y="0" width="5" height="1"/><rect x="19" y="1" width="1" height="1"/><rect x="24" y="1" width="1" height="1"/><rect x="19" y="2" width="1" height="1"/><rect x="24" y="2" width="1" height="1"/><rect x="19" y="3" width="1" height="1"/><rect x="24" y="3" width="1" height="1"/><rect x="19" y="4" width="5" height="1"/><rect x="19" y="5" width="1" height="1"/><rect x="24" y="5" width="1" height="1"/><rect x="19" y="6" width="1" height="1"/><rect x="24" y="6" width="1" height="1"/><rect x="19" y="7" width="1" height="1"/><rect x="24" y="7" width="1" height="1"/><rect x="19" y="8" width="5" height="1"/></svg>
<div style="left:149px;top:163px;width:27px;height:62px;box-sizing:border-box;border:1px solid #000"></div>
<div style="left:150px;top:212px;width:25px;height:1px;background:#b0b0b0;"></div>
<svg style="left:149px;top:163px" width="26" height="61" shape-rendering="crispEdges"><path d="M1 60.5 L26 60.5" fill="none" stroke="#000080"/></svg>
<svg style="left:178px;top:153px" width="27" height="9" shape-rendering="crispEdges" fill="#000"><rect x="2" y="0" width="3" height="1"/><rect x="1" y="1" width="1" height="1"/><rect x="5" y="1" width="1" height="1"/><rect x="5" y="2" width="1" height="1"/><rect x="5" y="3" width="1" height="1"/><rect x="4" y="4" width="1" height="1"/><rect x="3" y="5" width="1" height="1"/><rect x="2" y="6" width="1" height="1"/><rect x="1" y="7" width="1" height="1"/><rect x="1" y="8" width="5" height="1"/><rect x="9" y="0" width="3" height="1"/><rect x="8" y="1" width="1" height="1"/><rect x="12" y="1" width="1" height="1"/><rect x="8" y="2" width="1" height="1"/><rect x="12" y="2" width="1" height="1"/><rect x="8" y="3" width="1" height="1"/><rect x="12" y="3" width="1" height="1"/><rect x="8" y="4" width="1" height="1"/><rect x="12" y="4" width="1" height="1"/><rect x="8" y="5" width="1" height="1"/><rect x="12" y="5" width="1" height="1"/><rect x="8" y="6" width="1" height="1"/><rect x="12" y="6" width="1" height="1"/><rect x="8" y="7" width="1" height="1"/><rect x="12" y="7" width="1" height="1"/><rect x="9" y="8" width="3" height="1"/><rect x="19" y="0" width="5" height="1"/><rect x="19" y="1" width="1" height="1"/><rect x="24" y="1" width="1" height="1"/><rect x="19" y="2" width="1" height="1"/><rect x="24" y="2" width="1" height="1"/><rect x="19" y="3" width="1" height="1"/><rect x="24" y="3" width="1" height="1"/><rect x="19" y="4" width="5" height="1"/><rect x="19" y="5" width="1" height="1"/><rect x="24" y="5" width="1" height="1"/><rect x="19" y="6" width="1" height="1"/><rect x="24" y="6" width="1" height="1"/><rect x="19" y="7" width="1" height="1"/><rect x="24" y="7" width="1" height="1"/><rect x="19" y="8" width="5" height="1"/></svg>
<div style="left:178px;top:163px;width:27px;height:62px;box-sizing:border-box;border:1px solid #000"></div>
<div style="left:179px;top:212px;width:25px;height:1px;background:#b0b0b0;"></div>
<svg style="left:178px;top:163px" width="26" height="61" shape-rendering="crispEdges"><path d="M1 60.5 L26 60.5" fill="none" stroke="#000080"/></svg>
<svg style="left:207px;top:153px" width="27" height="9" shape-rendering="crispEdges" fill="#000"><rect x="2" y="0" width="3" height="1"/><rect x="1" y="1" width="1" height="1"/><rect x="5" y="1" width="1" height="1"/><rect x="5" y="2" width="1" height="1"/><rect x="5" y="3" width="1" height="1"/><rect x="4" y="4" width="1" height="1"/><rect x="3" y="5" width="1" height="1"/><rect x="2" y="6" width="1" height="1"/><rect x="1" y="7" width="1" height="1"/><rect x="1" y="8" width="5" height="1"/><rect x="10" y="0" width="1" height="1"/><rect x="9" y="1" width="2" height="1"/><rect x="8" y="2" width="1" height="1"/><rect x="10" y="2" width="1" height="1"/><rect x="10" y="3" width="1" height="1"/><rect x="10" y="4" width="1" height="1"/><rect x="10" y="5" width="1" height="1"/><rect x="10" y="6" width="1" height="1"/><rect x="10" y="7" width="1" height="1"/><rect x="10" y="8" width="1" height="1"/><rect x="19" y="0" width="5" height="1"/><rect x="19" y="1" width="1" height="1"/><rect x="24" y="1" width="1" height="1"/><rect x="19" y="2" width="1" height="1"/><rect x="24" y="2" width="1" height="1"/><rect x="19" y="3" width="1" height="1"/><rect x="24" y="3" width="1" height="1"/><rect x="19" y="4" width="5" height="1"/><rect x="19" y="5" width="1" height="1"/><rect x="24" y="5" width="1" height="1"/><rect x="19" y="6" width="1" height="1"/><rect x="24" y="6" width="1" height="1"/><rect x="19" y="7" width="1" height="1"/><rect x="24" y="7" width="1" height="1"/><rect x="19" y="8" width="5" height="1"/></svg>
<div style="left:207px;top:163px;width:27px;height:62px;box-sizing:border-box;border:1px solid #000"></div>
<div style="left:208px;top:212px;width:25px;height:1px;background:#b0b0b0;"></div>
<svg style="left:207px;top:163px" width="26" height="61" shape-rendering="crispEdges"><path d="M1 60.5 L26 60.5" fill="none" stroke="#000080"/></svg>
<svg style="left:236px;top:153px" width="27" height="9" shape-rendering="crispEdges" fill="#000"><rect x="2" y="0" width="3" height="1"/><rect x="1" y="1" width="1" height="1"/><rect x="5" y="1" width="1" height="1"/><rect x="5" y="2" width="1" height="1"/><rect x="5" y="3" width="1" height="1"/><rect x="4" y="4" width="1" height="1"/><rect x="3" y="5" width="1" height="1"/><rect x="2" y="6" width="1" height="1"/><rect x="1" y="7" width="1" height="1"/><rect x="1" y="8" width="5" height="1"/><rect x="9" y="0" width="3" height="1"/><rect x="8" y="1" width="1" height="1"/><rect x="12" y="1" width="1" height="1"/><rect x="12" y="2" width="1" height="1"/><rect x="12" y="3" width="1" height="1"/><rect x="11" y="4" width="1" height="1"/><rect x="10" y="5" width="1" height="1"/><rect x="9" y="6" width="1" height="1"/><rect x="8" y="7" width="1" height="1"/><rect x="8" y="8" width="5" height="1"/><rect x="19" y="0" width="5" height="1"/><rect x="19" y="1" width="1" height="1"/><rect x="24" y="1" width="1" height="1"/><rect x="19" y="2" width="1" height="1"/><rect x="24" y="2" width="1" height="1"/><rect x="19" y="3" width="1" height="1"/><rect x="24" y="3" width="1" height="1"/><rect x="19" y="4" width="5" height="1"/><rect x="19" y="5" width="1" height="1"/><rect x="24" y="5" width="1" height="1"/><rect x="19" y="6" width="1" height="1"/><rect x="24" y="6" width="1" height="1"/><rect x="19" y="7" width="1" height="1"/><rect x="24" y="7" width="1" height="1"/><rect x="19" y="8" width="5" height="1"/></svg>
<div style="left:236px;top:163px;width:27px;height:62px;box-sizing:border-box;border:1px solid #000"></div>
<div style="left:237px;top:212px;width:25px;height:1px;background:#b0b0b0;"></div>
<svg style="left:236px;top:163px" width="26" height="61" shape-rendering="crispEdges"><path d="M1 60.5 L26 60.5" fill="none" stroke="#000080"/></svg>
<svg style="left:265px;top:153px" width="27" height="9" shape-rendering="crispEdges" fill="#000"><rect x="2" y="0" width="3" height="1"/><rect x="1" y="1" width="1" height="1"/><rect x="5" y="1" width="1" height="1"/><rect x="5" y="2" width="1" height="1"/><rect x="5" y="3" width="1" height="1"/><rect x="4" y="4" width="1" height="1"/><rect x="3" y="5" width="1" height="1"/><rect x="2" y="6" width="1" height="1"/><rect x="1" y="7" width="1" height="1"/><rect x="1" y="8" width="5" height="1"/><rect x="9" y="0" width="3" height="1"/><rect x="8" y="1" width="1" height="1"/><rect x="12" y="1" width="1" height="1"/><rect x="12" y="2" width="1" height="1"/><rect x="12" y="3" width="1" height="1"/><rect x="10" y="4" width="2" height="1"/><rect x="12" y="5" width="1" height="1"/><rect x="12" y="6" width="1" height="1"/><rect x="8" y="7" width="1" height="1"/><rect x="12" y="7" width="1" height="1"/><rect x="9" y="8" width="3" height="1"/><rect x="21" y="0" width="1" height="1"/><rect x="20" y="1" width="1" height="1"/><rect x="22" y="1" width="1" height="1"/><rect x="20" y="2" width="1" height="1"/><rect x="22" y="2" width="1" height="1"/><rect x="20" y="3" width="1" height="1"/><rect x="22" y="3" width="1" height="1"/><rect x="19" y="4" width="1" height="1"/><rect x="23" y="4" width="1" height="1"/><rect x="19" y="5" width="5" height="1"/><rect x="19" y="6" width="1" height="1"/><rect x="23" y="6" width="1" height="1"/><rect x="18" y="7" width="1" height="1"/><rect x="24" y="7" width="1" height="1"/><rect x="18" y="8" width="1" height="1"/><rect x="24" y="8" width="1" height="1"/></svg>
<div style="left:265px;top:163px;width:27px;height:62px;box-sizing:border-box;border:1px solid #000"></div>
<div style="left:266px;top:212px;width:25px;height:1px;background:#b0b0b0;"></div>
<svg style="left:265px;top:163px" width="26" height="61" shape-rendering="crispEdges"><path d="M1.5 60.5 L2.5 60.5 L3.5 60.5 L4.5 60.5 L5.5 59.5 L6.5 59.5 L7.5 59.5 L8.5 59.5 L9.5 59.5 L10.5 57.5 L11.5 55.5 L12.5 51.5 L13.5 46.5 L14.5 40.5 L15.5 35.5 L16.5 32.5 L17.5 34.5 L18.5 37.5 L19.5 41.5 L20.5 46.5 L21.5 50.5 L22.5 53.5 L23.5 55.5 L24.5 56.5 L25.5 56.5 L26.5 56.5" fill="none" stroke="#000080"/></svg>
<svg style="left:294px;top:153px" width="27" height="9" shape-rendering="crispEdges" fill="#000"><rect x="2" y="0" width="3" height="1"/><rect x="1" y="1" width="1" height="1"/><rect x="5" y="1" width="1" height="1"/><rect x="5" y="2" width="1" height="1"/><rect x="5" y="3" width="1" height="1"/><rect x="4" y="4" width="1" height="1"/><rect x="3" y="5" width="1" height="1"/><rect x="2" y="6" width="1" height="1"/><rect x="1" y="7" width="1" height="1"/><rect x="1" y="8" width="5" height="1"/><rect x="11" y="0" width="1" height="1"/><rect x="10" y="1" width="2" height="1"/><rect x="10" y="2" width="2" height="1"/><rect x="9" y="3" width="1" height="1"/><rect x="11" y="3" width="1" height="1"/><rect x="9" y="4" width="1" height="1"/><rect x="11" y="4" width="1" height="1"/><rect x="8" y="5" width="1" height="1"/><rect x="11" y="5" width="1" height="1"/><rect x="8" y="6" width="5" height="1"/><rect x="11" y="7" width="1" height="1"/><rect x="11" y="8" width="1" height="1"/><rect x="21" y="0" width="1" height="1"/><rect x="20" y="1" width="1" height="1"/><rect x="22" y="1" width="1" height="1"/><rect x="20" y="2" width="1" height="1"/><rect x="22" y="2" width="1" height="1"/><rect x="20" y="3" width="1" height="1"/><rect x="22" y="3" width="1" height="1"/><rect x="19" y="4" width="1" height="1"/><rect x="23" y="4" width="1" height="1"/><rect x="19" y="5" width="5" height="1"/><rect x="19" y="6" width="1" height="1"/><rect x="23" y="6" width="1" height="1"/><rect x="18" y="7" width="1" height="1"/><rect x="24" y="7" width="1" height="1"/><rect x="18" y="8" width="1" height="1"/><rect x="24" y="8" width="1" height="1"/></svg>
<div style="left:294px;top:163px;width:27px;height:62px;box-sizing:border-box;border:1px solid #000"></div>
<div style="left:295px;top:212px;width:25px;height:1px;background:#b0b0b0;"></div>
<svg style="left:294px;top:163px" width="26" height="61" shape-rendering="crispEdges"><path d="M1.5 60.5 L2.5 60.5 L3.5 60.5 L4.5 60.5 L5.5 59.5 L6.5 59.5 L7.5 59.5 L8.5 59.5 L9.5 58.5 L10.5 57.5 L11.5 55.5 L12.5 51.5 L13.5 45.5 L14.5 39.5 L15.5 34.5 L16.5 31.5 L17.5 33.5 L18.5 36.5 L19.5 41.5 L20.5 46.5 L21.5 50.5 L22.5 53.5 L23.5 55.5 L24.5 56.5 L25.5 56.5 L26.5 56.5" fill="none" stroke="#000080"/></svg>
<svg style="left:323px;top:153px" width="27" height="9" shape-rendering="crispEdges" fill="#000"><rect x="2" y="0" width="3" height="1"/><rect x="1" y="1" width="1" height="1"/><rect x="5" y="1" width="1" height="1"/><rect x="5" y="2" width="1" height="1"/><rect x="5" y="3" width="1" height="1"/><rect x="4" y="4" width="1" height="1"/><rect x="3" y="5" width="1" height="1"/><rect x="2" y="6" width="1" height="1"/><rect x="1" y="7" width="1" height="1"/><rect x="1" y="8" width="5" height="1"/><rect x="9" y="0" width="4" height="1"/><rect x="8" y="1" width="1" height="1"/><rect x="8" y="2" width="1" height="1"/><rect x="8" y="3" width="4" height="1"/><rect x="12" y="4" width="1" height="1"/><rect x="12" y="5" width="1" height="1"/><rect x="12" y="6" width="1" height="1"/><rect x="8" y="7" width="1" height="1"/><rect x="12" y="7" width="1" height="1"/><rect x="9" y="8" width="3" height="1"/><rect x="19" y="0" width="5" height="1"/><rect x="19" y="1" width="1" height="1"/><rect x="24" y="1" width="1" height="1"/><rect x="19" y="2" width="1" height="1"/><rect x="24" y="2" width="1" height="1"/><rect x="19" y="3" width="1" height="1"/><rect x="24" y="3" width="1" height="1"/><rect x="19" y="4" width="5" height="1"/><rect x="19" y="5" width="1" height="1"/><rect x="24" y="5" width="1" height="1"/><rect x="19" y="6" width="1" height="1"/><rect x="24" y="6" width="1" height="1"/><rect x="19" y="7" width="1" height="1"/><rect x="24" y="7" width="1" height="1"/><rect x="19" y="8" width="5" height="1"/></svg>
<div style="left:323px;top:163px;width:27px;height:62px;box-sizing:border-box;border:1px solid #000"></div>
<div style="left:324px;top:212px;width:25px;height:1px;background:#b0b0b0;"></div>
<svg style="left:323px;top:163px" width="26" height="61" shape-rendering="crispEdges"><path d="M1.5 60.5 L2.5 60.5 L3.5 60.5 L4.5 60.5 L5.5 60.5 L6.5 60.5 L7.5 60.5 L8.5 60.5 L9.5 60.5 L10.5 60.5 L11.5 60.5 L12.5 60.5 L13.5 60.5 L14.5 59.5 L15.5 59.5 L16.5 59.5 L17.5 59.5 L18.5 59.5 L19.5 59.5 L20.5 60.5 L21.5 60.5 L22.5 60.5 L23.5 60.5 L24.5 60.5 L25.5 60.5 L26.5 60.5" fill="none" stroke="#000080"/></svg>
<svg style="left:352px;top:153px" width="27" height="9" shape-rendering="crispEdges" fill="#000"><rect x="2" y="0" width="3" height="1"/><rect x="1" y="1" width="1" height="1"/><rect x="5" y="1" width="1" height="1"/><rect x="5" y="2" width="1" height="1"/><rect x="5" y="3" width="1" height="1"/><rect x="4" y="4" width="1" height="1"/><rect x="3" y="5" width="1" height="1"/><rect x="2" y="6" width="1" height="1"/><rect x="1" y="7" width="1" height="1"/><rect x="1" y="8" width="5" height="1"/><rect x="9" y="0" width="3" height="1"/><rect x="8" y="1" width="1" height="1"/><rect x="12" y="1" width="1" height="1"/><rect x="8" y="2" width="1" height="1"/><rect x="8" y="3" width="1" height="1"/><rect x="10" y="3" width="2" height="1"/><rect x="8" y="4" width="2" height="1"/><rect x="12" y="4" width="1" height="1"/><rect x="8" y="5" width="1" height="1"/><rect x="12" y="5" width="1" height="1"/><rect x="8" y="6" width="1" height="1"/><rect x="12" y="6" width="1" height="1"/><rect x="8" y="7" width="1" height="1"/><rect x="12" y="7" width="1" height="1"/><rect x="9" y="8" width="3" height="1"/><rect x="21" y="0" width="1" height="1"/><rect x="20" y="1" width="1" height="1"/><rect x="22" y="1" width="1" height="1"/><rect x="20" y="2" width="1" height="1"/><rect x="22" y="2" width="1" height="1"/><rect x="20" y="3" width="1" height="1"/><rect x="22" y="3" width="1" height="1"/><rect x="19" y="4" width="1" height="1"/><rect x="23" y="4" width="1" height="1"/><rect x="19" y="5" width="5" height="1"/><rect x="19" y="6" width="1" height="1"/><rect x="23" y="6" width="1" height="1"/><rect x="18" y="7" width="1" height="1"/><rect x="24" y="7" width="1" height="1"/><rect x="18" y="8" width="1" height="1"/><rect x="24" y="8" width="1" height="1"/></svg>
<div style="left:352px;top:163px;width:27px;height:62px;box-sizing:border-box;border:1px solid #000"></div>
<div style="left:353px;top:212px;width:25px;height:1px;background:#b0b0b0;"></div>
<svg style="left:352px;top:163px" width="26" height="61" shape-rendering="crispEdges"><path d="M1.5 60.5 L2.5 60.5 L3.5 60.5 L4.5 60.5 L5.5 60.5 L6.5 59.5 L7.5 59.5 L8.5 59.5 L9.5 59.5 L10.5 58.5 L11.5 56.5 L12.5 52.5 L13.5 48.5 L14.5 43.5 L15.5 38.5 L16.5 36.5 L17.5 37.5 L18.5 40.5 L19.5 44.5 L20.5 48.5 L21.5 51.5 L22.5 54.5 L23.5 56.5 L24.5 56.5 L25.5 57.5 L26.5 57.5" fill="none" stroke="#000080"/></svg>
<svg style="left:381px;top:153px" width="27" height="9" shape-rendering="crispEdges" fill="#000"><rect x="2" y="0" width="3" height="1"/><rect x="1" y="1" width="1" height="1"/><rect x="5" y="1" width="1" height="1"/><rect x="5" y="2" width="1" height="1"/><rect x="5" y="3" width="1" height="1"/><rect x="4" y="4" width="1" height="1"/><rect x="3" y="5" width="1" height="1"/><rect x="2" y="6" width="1" height="1"/><rect x="1" y="7" width="1" height="1"/><rect x="1" y="8" width="5" height="1"/><rect x="8" y="0" width="5" height="1"/><rect x="11" y="1" width="1" height="1"/><rect x="11" y="2" width="1" height="1"/><rect x="10" y="3" width="1" height="1"/><rect x="10" y="4" width="1" height="1"/><rect x="10" y="5" width="1" height="1"/><rect x="9" y="6" width="1" height="1"/><rect x="9" y="7" width="1" height="1"/><rect x="9" y="8" width="1" height="1"/><rect x="21" y="0" width="1" height="1"/><rect x="20" y="1" width="1" height="1"/><rect x="22" y="1" width="1" height="1"/><rect x="20" y="2" width="1" height="1"/><rect x="22" y="2" width="1" height="1"/><rect x="20" y="3" width="1" height="1"/><rect x="22" y="3" width="1" height="1"/><rect x="19" y="4" width="1" height="1"/><rect x="23" y="4" width="1" height="1"/><rect x="19" y="5" width="5" height="1"/><rect x="19" y="6" width="1" height="1"/><rect x="23" y="6" width="1" height="1"/><rect x="18" y="7" width="1" height="1"/><rect x="24" y="7" width="1" height="1"/><rect x="18" y="8" width="1" height="1"/><rect x="24" y="8" width="1" height="1"/></svg>
<div style="left:381px;top:163px;width:27px;height:62px;box-sizing:border-box;border:1px solid #000"></div>
<div style="left:382px;top:212px;width:25px;height:1px;background:#b0b0b0;"></div>
<svg style="left:381px;top:163px" width="26" height="61" shape-rendering="crispEdges"><path d="M1.5 60.5 L2.5 60.5 L3.5 60.5 L4.5 60.5 L5.5 59.5 L6.5 59.5 L7.5 59.5 L8.5 59.5 L9.5 59.5 L10.5 58.5 L11.5 57.5 L12.5 54.5 L13.5 49.5 L14.5 42.5 L15.5 35.5 L16.5 28.5 L17.5 25.5 L18.5 27.5 L19.5 31.5 L20.5 37.5 L21.5 43.5 L22.5 48.5 L23.5 52.5 L24.5 54.5 L25.5 55.5 L26.5 55.5" fill="none" stroke="#000080"/></svg>
<svg style="left:410px;top:153px" width="27" height="9" shape-rendering="crispEdges" fill="#000"><rect x="2" y="0" width="3" height="1"/><rect x="1" y="1" width="1" height="1"/><rect x="5" y="1" width="1" height="1"/><rect x="5" y="2" width="1" height="1"/><rect x="5" y="3" width="1" height="1"/><rect x="4" y="4" width="1" height="1"/><rect x="3" y="5" width="1" height="1"/><rect x="2" y="6" width="1" height="1"/><rect x="1" y="7" width="1" height="1"/><rect x="1" y="8" width="5" height="1"/><rect x="9" y="0" width="3" height="1"/><rect x="8" y="1" width="1" height="1"/><rect x="12" y="1" width="1" height="1"/><rect x="8" y="2" width="1" height="1"/><rect x="12" y="2" width="1" height="1"/><rect x="8" y="3" width="1" height="1"/><rect x="12" y="3" width="1" height="1"/><rect x="9" y="4" width="3" height="1"/><rect x="8" y="5" width="1" height="1"/><rect x="12" y="5" width="1" height="1"/><rect x="8" y="6" width="1" height="1"/><rect x="12" y="6" width="1" height="1"/><rect x="8" y="7" width="1" height="1"/><rect x="12" y="7" width="1" height="1"/><rect x="9" y="8" width="3" height="1"/><rect x="19" y="0" width="5" height="1"/><rect x="19" y="1" width="1" height="1"/><rect x="24" y="1" width="1" height="1"/><rect x="19" y="2" width="1" height="1"/><rect x="24" y="2" width="1" height="1"/><rect x="19" y="3" width="1" height="1"/><rect x="24" y="3" width="1" height="1"/><rect x="19" y="4" width="5" height="1"/><rect x="19" y="5" width="1" height="1"/><rect x="24" y="5" width="1" height="1"/><rect x="19" y="6" width="1" height="1"/><rect x="24" y="6" width="1" height="1"/><rect x="19" y="7" width="1" height="1"/><rect x="24" y="7" width="1" height="1"/><rect x="19" y="8" width="5" height="1"/></svg>
<div style="left:410px;top:163px;width:27px;height:62px;box-sizing:border-box;border:1px solid #000"></div>
<div style="left:411px;top:212px;width:25px;height:1px;background:#b0b0b0;"></div>
<svg style="left:410px;top:163px" width="26" height="61" shape-rendering="crispEdges"><path d="M1.5 60.5 L2.5 60.5 L3.5 60.5 L4.5 60.5 L5.5 60.5 L6.5 60.5 L7.5 60.5 L8.5 60.5 L9.5 60.5 L10.5 60.5 L11.5 60.5 L12.5 60.5 L13.5 60.5 L14.5 59.5 L15.5 59.5 L16.5 59.5 L17.5 60.5 L18.5 60.5 L19.5 60.5 L20.5 60.5 L21.5 60.5 L22.5 60.5 L23.5 60.5 L24.5 60.5 L25.5 60.5 L26.5 60.5" fill="none" stroke="#000080"/></svg>
<svg style="left:439px;top:153px" width="27" height="9" shape-rendering="crispEdges" fill="#000"><rect x="2" y="0" width="3" height="1"/><rect x="1" y="1" width="1" height="1"/><rect x="5" y="1" width="1" height="1"/><rect x="5" y="2" width="1" height="1"/><rect x="5" y="3" width="1" height="1"/><rect x="4" y="4" width="1" height="1"/><rect x="3" y="5" width="1" height="1"/><rect x="2" y="6" width="1" height="1"/><rect x="1" y="7" width="1" height="1"/><rect x="1" y="8" width="5" height="1"/><rect x="9" y="0" width="3" height="1"/><rect x="8" y="1" width="1" height="1"/><rect x="12" y="1" width="1" height="1"/><rect x="8" y="2" width="1" height="1"/><rect x="12" y="2" width="1" height="1"/><rect x="8" y="3" width="1" height="1"/><rect x="12" y="3" width="1" height="1"/><rect x="8" y="4" width="1" height="1"/><rect x="11" y="4" width="2" height="1"/><rect x="9" y="5" width="2" height="1"/><rect x="12" y="5" width="1" height="1"/><rect x="12" y="6" width="1" height="1"/><rect x="8" y="7" width="1" height="1"/><rect x="12" y="7" width="1" height="1"/><rect x="9" y="8" width="3" height="1"/><rect x="21" y="0" width="1" height="1"/><rect x="20" y="1" width="1" height="1"/><rect x="22" y="1" width="1" height="1"/><rect x="20" y="2" width="1" height="1"/><rect x="22" y="2" width="1" height="1"/><rect x="20" y="3" width="1" height="1"/><rect x="22" y="3" width="1" height="1"/><rect x="19" y="4" width="1" height="1"/><rect x="23" y="4" width="1" height="1"/><rect x="19" y="5" width="5" height="1"/><rect x="19" y="6" width="1" height="1"/><rect x="23" y="6" width="1" height="1"/><rect x="18" y="7" width="1" height="1"/><rect x="24" y="7" width="1" height="1"/><rect x="18" y="8" width="1" height="1"/><rect x="24" y="8" width="1" height="1"/></svg>
<div style="left:439px;top:163px;width:27px;height:62px;box-sizing:border-box;border:1px solid #000"></div>
<div style="left:440px;top:212px;width:25px;height:1px;background:#b0b0b0;"></div>
<svg style="left:439px;top:163px" width="26" height="61" shape-rendering="crispEdges"><path d="M1.5 60.5 L2.5 60.5 L3.5 60.5 L4.5 60.5 L5.5 60.5 L6.5 59.5 L7.5 59.5 L8.5 59.5 L9.5 59.5 L10.5 58.5 L11.5 56.5 L12.5 52.5 L13.5 47.5 L14.5 42.5 L15.5 37.5 L16.5 34.5 L17.5 36.5 L18.5 39.5 L19.5 43.5 L20.5 47.5 L21.5 51.5 L22.5 54.5 L23.5 56.5 L24.5 56.5 L25.5 56.5 L26.5 57.5" fill="none" stroke="#000080"/></svg>
<svg style="left:468px;top:153px" width="27" height="9" shape-rendering="crispEdges" fill="#000"><rect x="2" y="0" width="3" height="1"/><rect x="1" y="1" width="1" height="1"/><rect x="5" y="1" width="1" height="1"/><rect x="5" y="2" width="1" height="1"/><rect x="5" y="3" width="1" height="1"/><rect x="3" y="4" width="2" height="1"/><rect x="5" y="5" width="1" height="1"/><rect x="5" y="6" width="1" height="1"/><rect x="1" y="7" width="1" height="1"/><rect x="5" y="7" width="1" height="1"/><rect x="2" y="8" width="3" height="1"/><rect x="9" y="0" width="3" height="1"/><rect x="8" y="1" width="1" height="1"/><rect x="12" y="1" width="1" height="1"/><rect x="8" y="2" width="1" height="1"/><rect x="12" y="2" width="1" height="1"/><rect x="8" y="3" width="1" height="1"/><rect x="12" y="3" width="1" height="1"/><rect x="8" y="4" width="1" height="1"/><rect x="12" y="4" width="1" height="1"/><rect x="8" y="5" width="1" height="1"/><rect x="12" y="5" width="1" height="1"/><rect x="8" y="6" width="1" height="1"/><rect x="12" y="6" width="1" height="1"/><rect x="8" y="7" width="1" height="1"/><rect x="12" y="7" width="1" height="1"/><rect x="9" y="8" width="3" height="1"/><rect x="19" y="0" width="5" height="1"/><rect x="19" y="1" width="1" height="1"/><rect x="24" y="1" width="1" height="1"/><rect x="19" y="2" width="1" height="1"/><rect x="24" y="2" width="1" height="1"/><rect x="19" y="3" width="1" height="1"/><rect x="24" y="3" width="1" height="1"/><rect x="19" y="4" width="5" height="1"/><rect x="19" y="5" width="1" height="1"/><rect x="24" y="5" width="1" height="1"/><rect x="19" y="6" width="1" height="1"/><rect x="24" y="6" width="1" height="1"/><rect x="19" y="7" width="1" height="1"/><rect x="24" y="7" width="1" height="1"/><rect x="19" y="8" width="5" height="1"/></svg>
<div style="left:468px;top:163px;width:27px;height:62px;box-sizing:border-box;border:1px solid #000"></div>
<div style="left:469px;top:212px;width:25px;height:1px;background:#b0b0b0;"></div>
<svg style="left:468px;top:163px" width="26" height="61" shape-rendering="crispEdges"><path d="M1.5 60.5 L2.5 60.5 L3.5 60.5 L4.5 60.5 L5.5 60.5 L6.5 60.5 L7.5 60.5 L8.5 60.5 L9.5 60.5 L10.5 60.5 L11.5 60.5 L12.5 60.5 L13.5 60.5 L14.5 59.5 L15.5 59.5 L16.5 59.5 L17.5 59.5 L18.5 59.5 L19.5 60.5 L20.5 60.5 L21.5 60.5 L22.5 60.5 L23.5 60.5 L24.5 60.5 L25.5 60.5 L26.5 60.5" fill="none" stroke="#000080"/></svg>
<svg style="left:497px;top:153px" width="27" height="9" shape-rendering="crispEdges" fill="#000"><rect x="2" y="0" width="3" height="1"/><rect x="1" y="1" width="1" height="1"/><rect x="5" y="1" width="1" height="1"/><rect x="5" y="2" width="1" height="1"/><rect x="5" y="3" width="1" height="1"/><rect x="3" y="4" width="2" height="1"/><rect x="5" y="5" width="1" height="1"/><rect x="5" y="6" width="1" height="1"/><rect x="1" y="7" width="1" height="1"/><rect x="5" y="7" width="1" height="1"/><rect x="2" y="8" width="3" height="1"/><rect x="10" y="0" width="1" height="1"/><rect x="9" y="1" width="2" height="1"/><rect x="8" y="2" width="1" height="1"/><rect x="10" y="2" width="1" height="1"/><rect x="10" y="3" width="1" height="1"/><rect x="10" y="4" width="1" height="1"/><rect x="10" y="5" width="1" height="1"/><rect x="10" y="6" width="1" height="1"/><rect x="10" y="7" width="1" height="1"/><rect x="10" y="8" width="1" height="1"/><rect x="21" y="0" width="1" height="1"/><rect x="20" y="1" width="1" height="1"/><rect x="22" y="1" width="1" height="1"/><rect x="20" y="2" width="1" height="1"/><rect x="22" y="2" width="1" height="1"/><rect x="20" y="3" width="1" height="1"/><rect x="22" y="3" width="1" height="1"/><rect x="19" y="4" width="1" height="1"/><rect x="23" y="4" width="1" height="1"/><rect x="19" y="5" width="5" height="1"/><rect x="19" y="6" width="1" height="1"/><rect x="23" y="6" width="1" height="1"/><rect x="18" y="7" width="1" height="1"/><rect x="24" y="7" width="1" height="1"/><rect x="18" y="8" width="1" height="1"/><rect x="24" y="8" width="1" height="1"/></svg>
<div style="left:497px;top:163px;width:27px;height:62px;box-sizing:border-box;border:1px solid #000"></div>
<div style="left:498px;top:212px;width:25px;height:1px;background:#b0b0b0;"></div>
<svg style="left:497px;top:163px" width="26" height="61" shape-rendering="crispEdges"><path d="M1.5 60.5 L2.5 60.5 L3.5 60.5 L4.5 60.5 L5.5 60.5 L6.5 59.5 L7.5 59.5 L8.5 59.5 L9.5 59.5 L10.5 58.5 L11.5 56.5 L12.5 52.5 L13.5 47.5 L14.5 42.5 L15.5 37.5 L16.5 35.5 L17.5 36.5 L18.5 40.5 L19.5 43.5 L20.5 48.5 L21.5 51.5 L22.5 54.5 L23.5 56.5 L24.5 56.5 L25.5 56.5 L26.5 57.5" fill="none" stroke="#000080"/></svg>
<svg style="left:526px;top:153px" width="27" height="9" shape-rendering="crispEdges" fill="#000"><rect x="2" y="0" width="3" height="1"/><rect x="1" y="1" width="1" height="1"/><rect x="5" y="1" width="1" height="1"/><rect x="5" y="2" width="1" height="1"/><rect x="5" y="3" width="1" height="1"/><rect x="3" y="4" width="2" height="1"/><rect x="5" y="5" width="1" height="1"/><rect x="5" y="6" width="1" height="1"/><rect x="1" y="7" width="1" height="1"/><rect x="5" y="7" width="1" height="1"/><rect x="2" y="8" width="3" height="1"/><rect x="9" y="0" width="3" height="1"/><rect x="8" y="1" width="1" height="1"/><rect x="12" y="1" width="1" height="1"/><rect x="12" y="2" width="1" height="1"/><rect x="12" y="3" width="1" height="1"/><rect x="11" y="4" width="1" height="1"/><rect x="10" y="5" width="1" height="1"/><rect x="9" y="6" width="1" height="1"/><rect x="8" y="7" width="1" height="1"/><rect x="8" y="8" width="5" height="1"/><rect x="21" y="0" width="1" height="1"/><rect x="20" y="1" width="1" height="1"/><rect x="22" y="1" width="1" height="1"/><rect x="20" y="2" width="1" height="1"/><rect x="22" y="2" width="1" height="1"/><rect x="20" y="3" width="1" height="1"/><rect x="22" y="3" width="1" height="1"/><rect x="19" y="4" width="1" height="1"/><rect x="23" y="4" width="1" height="1"/><rect x="19" y="5" width="5" height="1"/><rect x="19" y="6" width="1" height="1"/><rect x="23" y="6" width="1" height="1"/><rect x="18" y="7" width="1" height="1"/><rect x="24" y="7" width="1" height="1"/><rect x="18" y="8" width="1" height="1"/><rect x="24" y="8" width="1" height="1"/></svg>
<div style="left:526px;top:163px;width:27px;height:62px;box-sizing:border-box;border:1px solid #000"></div>
<div style="left:527px;top:212px;width:25px;height:1px;background:#b0b0b0;"></div>
<svg style="left:526px;top:163px" width="26" height="61" shape-rendering="crispEdges"><path d="M1.5 60.5 L2.5 60.5 L3.5 60.5 L4.5 60.5 L5.5 60.5 L6.5 59.5 L7.5 59.5 L8.5 59.5 L9.5 59.5 L10.5 58.5 L11.5 56.5 L12.5 52.5 L13.5 48.5 L14.5 43.5 L15.5 38.5 L16.5 36.5 L17.5 37.5 L18.5 40.5 L19.5 44.5 L20.5 48.5 L21.5 51.5 L22.5 54.5 L23.5 56.5 L24.5 56.5 L25.5 57.5 L26.5 57.5" fill="none" stroke="#000080"/></svg>
<svg style="left:555px;top:153px" width="27" height="9" shape-rendering="crispEdges" fill="#000"><rect x="2" y="0" width="3" height="1"/><rect x="1" y="1" width="1" height="1"/><rect x="5" y="1" width="1" height="1"/><rect x="5" y="2" width="1" height="1"/><rect x="5" y="3" width="1" height="1"/><rect x="3" y="4" width="2" height="1"/><rect x="5" y="5" width="1" height="1"/><rect x="5" y="6" width="1" height="1"/><rect x="1" y="7" width="1" height="1"/><rect x="5" y="7" width="1" height="1"/><rect x="2" y="8" width="3" height="1"/><rect x="9" y="0" width="3" height="1"/><rect x="8" y="1" width="1" height="1"/><rect x="12" y="1" width="1" height="1"/><rect x="12" y="2" width="1" height="1"/><rect x="12" y="3" width="1" height="1"/><rect x="10" y="4" width="2" height="1"/><rect x="12" y="5" width="1" height="1"/><rect x="12" y="6" width="1" height="1"/><rect x="8" y="7" width="1" height="1"/><rect x="12" y="7" width="1" height="1"/><rect x="9" y="8" width="3" height="1"/><rect x="21" y="0" width="1" height="1"/><rect x="20" y="1" width="1" height="1"/><rect x="22" y="1" width="1" height="1"/><rect x="20" y="2" width="1" height="1"/><rect x="22" y="2" width="1" height="1"/><rect x="20" y="3" width="1" height="1"/><rect x="22" y="3" width="1" height="1"/><rect x="19" y="4" width="1" height="1"/><rect x="23" y="4" width="1" height="1"/><rect x="19" y="5" width="5" height="1"/><rect x="19" y="6" width="1" height="1"/><rect x="23" y="6" width="1" height="1"/><rect x="18" y="7" width="1" height="1"/><rect x="24" y="7" width="1" height="1"/><rect x="18" y="8" width="1" height="1"/><rect x="24" y="8" width="1" height="1"/></svg>
<div style="left:555px;top:163px;width:27px;height:62px;box-sizing:border-box;border:1px solid #000"></div>
<div style="left:556px;top:212px;width:25px;height:1px;background:#b0b0b0;"></div>
<svg style="left:555px;top:163px" width="26" height="61" shape-rendering="crispEdges"><path d="M1.5 60.5 L2.5 60.5 L3.5 59.5 L4.5 59.5 L5.5 59.5 L6.5 59.5 L7.5 59.5 L8.5 58.5 L9.5 58.5 L10.5 56.5 L11.5 52.5 L12.5 46.5 L13.5 38.5 L14.5 28.5 L15.5 20.5 L16.5 16.5 L17.5 18.5 L18.5 24.5 L19.5 31.5 L20.5 38.5 L21.5 44.5 L22.5 50.5 L23.5 53.5 L24.5 53.5 L25.5 54.5 L26.5 54.5" fill="none" stroke="#000080"/></svg>
<svg style="left:584px;top:153px" width="27" height="9" shape-rendering="crispEdges" fill="#000"><rect x="2" y="0" width="3" height="1"/><rect x="1" y="1" width="1" height="1"/><rect x="5" y="1" width="1" height="1"/><rect x="5" y="2" width="1" height="1"/><rect x="5" y="3" width="1" height="1"/><rect x="3" y="4" width="2" height="1"/><rect x="5" y="5" width="1" height="1"/><rect x="5" y="6" width="1" height="1"/><rect x="1" y="7" width="1" height="1"/><rect x="5" y="7" width="1" height="1"/><rect x="2" y="8" width="3" height="1"/><rect x="11" y="0" width="1" height="1"/><rect x="10" y="1" width="2" height="1"/><rect x="10" y="2" width="2" height="1"/><rect x="9" y="3" width="1" height="1"/><rect x="11" y="3" width="1" height="1"/><rect x="9" y="4" width="1" height="1"/><rect x="11" y="4" width="1" height="1"/><rect x="8" y="5" width="1" height="1"/><rect x="11" y="5" width="1" height="1"/><rect x="8" y="6" width="5" height="1"/><rect x="11" y="7" width="1" height="1"/><rect x="11" y="8" width="1" height="1"/><rect x="19" y="0" width="5" height="1"/><rect x="19" y="1" width="1" height="1"/><rect x="24" y="1" width="1" height="1"/><rect x="19" y="2" width="1" height="1"/><rect x="24" y="2" width="1" height="1"/><rect x="19" y="3" width="1" height="1"/><rect x="24" y="3" width="1" height="1"/><rect x="19" y="4" width="5" height="1"/><rect x="19" y="5" width="1" height="1"/><rect x="24" y="5" width="1" height="1"/><rect x="19" y="6" width="1" height="1"/><rect x="24" y="6" width="1" height="1"/><rect x="19" y="7" width="1" height="1"/><rect x="24" y="7" width="1" height="1"/><rect x="19" y="8" width="5" height="1"/></svg>
<div style="left:584px;top:163px;width:27px;height:62px;box-sizing:border-box;border:1px solid #000"></div>
<div style="left:585px;top:212px;width:25px;height:1px;background:#b0b0b0;"></div>
<svg style="left:584px;top:163px" width="26" height="61" shape-rendering="crispEdges"><path d="M1.5 60.5 L2.5 60.5 L3.5 60.5 L4.5 60.5 L5.5 60.5 L6.5 60.5 L7.5 60.5 L8.5 60.5 L9.5 60.5 L10.5 60.5 L11.5 60.5 L12.5 60.5 L13.5 60.5 L14.5 59.5 L15.5 59.5 L16.5 58.5 L17.5 58.5 L18.5 58.5 L19.5 59.5 L20.5 59.5 L21.5 60.5 L22.5 60.5 L23.5 60.5 L24.5 60.5 L25.5 60.5 L26.5 60.5" fill="none" stroke="#000080"/></svg>
<svg style="left:105px;top:134px" width="12" height="9" shape-rendering="crispEdges"><rect x="0" y="0" width="2" height="1" fill="#000000"/><rect x="0" y="1" width="4" height="1" fill="#000000"/><rect x="0" y="2" width="7" height="1" fill="#000000"/><rect x="0" y="3" width="10" height="1" fill="#000000"/><rect x="0" y="4" width="12" height="1" fill="#000000"/><rect x="0" y="5" width="10" height="1" fill="#000000"/><rect x="0" y="6" width="7" height="1" fill="#000000"/><rect x="0" y="7" width="4" height="1" fill="#000000"/><rect x="0" y="8" width="2" height="1" fill="#000000"/></svg>
<svg style="left:137px;top:50px" width="17" height="16" shape-rendering="crispEdges"><rect x="1" y="0" width="1" height="1" fill="#000000"/><rect x="3" y="0" width="1" height="1" fill="#000000"/><rect x="5" y="0" width="1" height="1" fill="#000000"/><rect x="7" y="0" width="1" height="1" fill="#000000"/><rect x="9" y="0" width="1" height="1" fill="#000000"/><rect x="11" y="0" width="1" height="1" fill="#000000"/><rect x="13" y="0" width="1" height="1" fill="#000000"/><rect x="15" y="0" width="1" height="1" fill="#000000"/><rect x="0" y="1" width="1" height="1" fill="#000000"/><rect x="16" y="1" width="1" height="1" fill="#000000"/><rect x="0" y="3" width="1" height="1" fill="#000000"/><rect x="16" y="3" width="1" height="1" fill="#000000"/><rect x="0" y="5" width="1" height="1" fill="#000000"/><rect x="16" y="5" width="1" height="1" fill="#000000"/><rect x="0" y="7" width="1" height="1" fill="#000000"/><rect x="16" y="7" width="1" height="1" fill="#000000"/><rect x="0" y="9" width="1" height="1" fill="#000000"/><rect x="16" y="9" width="1" height="1" fill="#000000"/><rect x="0" y="11" width="1" height="1" fill="#000000"/><rect x="16" y="11" width="1" height="1" fill="#000000"/><rect x="0" y="13" width="1" height="1" fill="#000000"/><rect x="16" y="13" width="1" height="1" fill="#000000"/><rect x="0" y="15" width="1" height="1" fill="#000000"/><rect x="2" y="15" width="1" height="1" fill="#000000"/><rect x="4" y="15" width="1" height="1" fill="#000000"/><rect x="6" y="15" width="1" height="1" fill="#000000"/><rect x="8" y="15" width="1" height="1" fill="#000000"/><rect x="10" y="15" width="1" height="1" fill="#000000"/><rect x="12" y="15" width="1" height="1" fill="#000000"/><rect x="14" y="15" width="1" height="1" fill="#000000"/><rect x="16" y="15" width="1" height="1" fill="#000000"/></svg>
</div></body></html>
